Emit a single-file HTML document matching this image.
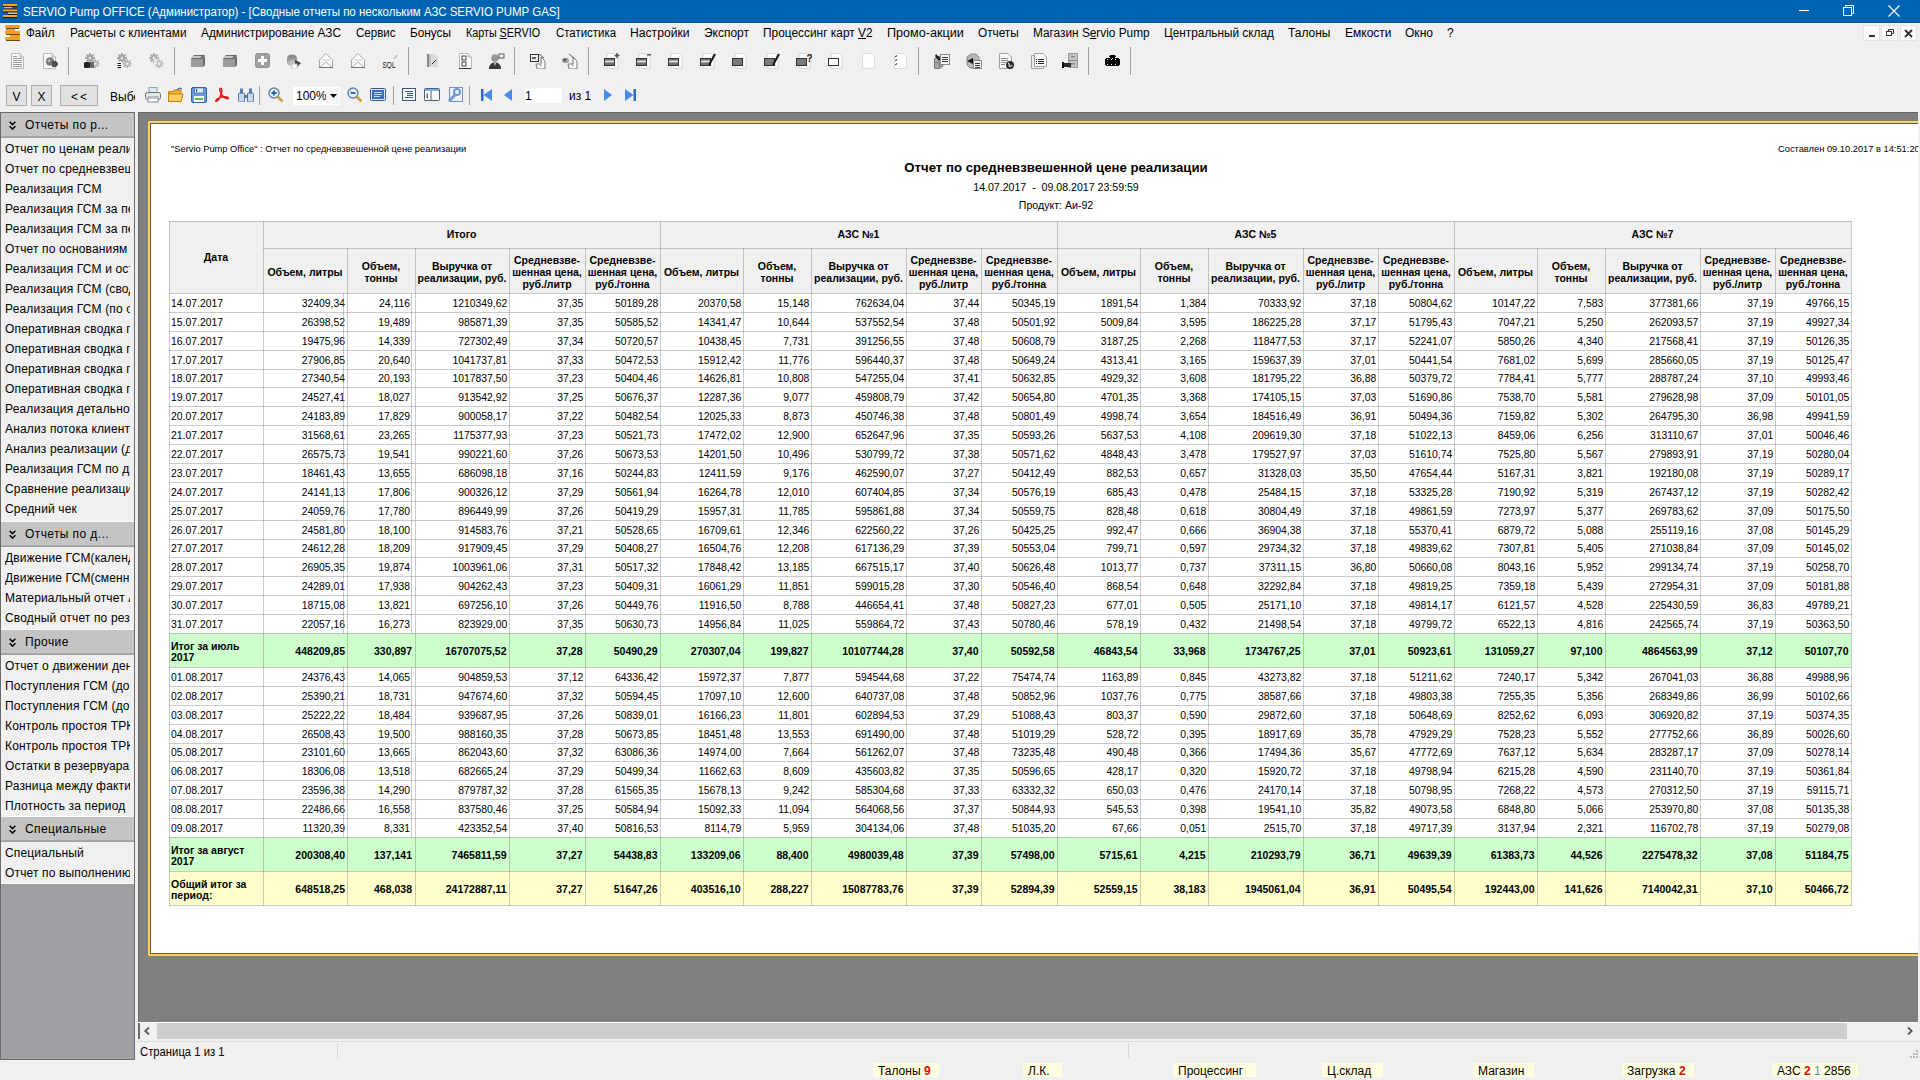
<!DOCTYPE html><html><head><meta charset="utf-8"><title>SERVIO Pump OFFICE</title><style>
*{box-sizing:border-box}
html,body{margin:0;padding:0}
body{width:1920px;height:1080px;position:relative;overflow:hidden;background:#f0f0f0;font-family:"Liberation Sans",sans-serif;color:#000}
div{position:absolute}
.t{white-space:nowrap;line-height:1}
.mi{font-size:12px;white-space:nowrap;line-height:14px;top:26px;color:#000;transform-origin:0 0}
.lp{font-size:12px;white-space:nowrap;line-height:14px;left:5px;color:#000;transform-origin:0 0;letter-spacing:0.15px}
.rc{font-size:10.4px;white-space:nowrap;line-height:19px;text-align:right;overflow:hidden}
.rl{font-size:10.4px;white-space:nowrap;line-height:19px;text-align:left}
.hd{font-size:10.5px;font-weight:bold;text-align:center;line-height:12.2px;display:flex;align-items:center;justify-content:center}
svg{position:absolute}

</style></head><body>
<div style="left:0px;top:0px;width:1920px;height:23px;background:#0063b1"></div>
<div style="left:0px;top:22px;width:1920px;height:1px;background:#0c5896"></div>
<svg style="left:3px;top:4px" width="15" height="15" viewBox="0 0 15 15"><rect x="0" y="0" width="14" height="2" fill="#f5a623"/><rect x="0" y="2" width="14" height="1" fill="#2a1a00"/><rect x="1" y="3" width="8" height="1.5" fill="#e0c090"/><rect x="0" y="4.5" width="14" height="1" fill="#2a1a00"/><rect x="0" y="5.5" width="14" height="2" fill="#f5a623"/><rect x="0" y="7.5" width="14" height="1" fill="#2a1a00"/><rect x="5" y="8.5" width="9" height="1.5" fill="#e0c090"/><rect x="5" y="10" width="9" height="1" fill="#2a1a00"/><rect x="0" y="11" width="14" height="2" fill="#f5a623"/><rect x="0" y="13" width="14" height="1.2" fill="#2a1a00"/></svg>
<div style="left:23px;top:5px;font-size:12px;line-height:14px;color:#fff;white-space:nowrap;transform:scaleX(0.957);transform-origin:0 0">SERVIO Pump OFFICE (Администратор) - [Сводные отчеты по нескольким АЗС SERVIO PUMP GAS]</div>
<div style="left:1799px;top:10px;width:10px;height:1px;background:#fff"></div>
<svg style="left:1843px;top:5px" width="11" height="11" viewBox="0 0 11 11"><rect x="0.5" y="2.5" width="8" height="8" fill="none" stroke="#fff"/><path d="M2.5 2.5V0.5H10.5V8.5H8.5" fill="none" stroke="#fff"/></svg>
<svg style="left:1888px;top:5px" width="12" height="12" viewBox="0 0 12 12"><path d="M0.5 0.5L11.5 11.5M11.5 0.5L0.5 11.5" stroke="#fff" stroke-width="1.1"/></svg>
<div style="left:0px;top:23px;width:1920px;height:1px;background:#e6f8fa"></div>
<svg style="left:5px;top:25px" width="16" height="16" viewBox="0 0 16 16"><rect x="0" y="0" width="15" height="3" rx="1" fill="#f0a020"/><rect x="1" y="3" width="13" height="1" fill="#6b4a10"/><rect x="1" y="4" width="9" height="2" fill="#f0a020"/><rect x="0" y="6" width="15" height="3" rx="1" fill="#f0a020"/><rect x="1" y="9" width="14" height="1" fill="#6b4a10"/><rect x="5" y="10" width="10" height="2" fill="#f0a020"/><rect x="0" y="12" width="15" height="3" rx="1" fill="#f0a020"/><rect x="1" y="15" width="14" height="1" fill="#6b4a10"/></svg>
<div class="mi" style="left:26px;transform:scaleX(0.965)">Файл</div>
<div class="mi" style="left:69.5px;transform:scaleX(0.980)">Расчеты с клиентами</div>
<div class="mi" style="left:201px;transform:scaleX(0.990)">Администрирование АЗС</div>
<div class="mi" style="left:356px;transform:scaleX(0.961)">Сервис</div>
<div class="mi" style="left:410px;transform:scaleX(0.984)">Бонусы</div>
<div class="mi" style="left:466px;transform:scaleX(0.895)">Карты <u>S</u>ERVIO</div>
<div class="mi" style="left:555.5px;transform:scaleX(0.952)">Статистика</div>
<div class="mi" style="left:630px;transform:scaleX(1.011)">Настройки</div>
<div class="mi" style="left:704px;transform:scaleX(0.998)">Экспорт</div>
<div class="mi" style="left:763px;transform:scaleX(0.991)">Процессинг карт <u>V</u>2</div>
<div class="mi" style="left:887px;transform:scaleX(1.050)">Промо-акции</div>
<div class="mi" style="left:978px;transform:scaleX(0.982)">Отчеты</div>
<div class="mi" style="left:1033px;transform:scaleX(0.985)">Магазин S<u>e</u>rvio Pump</div>
<div class="mi" style="left:1164px;transform:scaleX(0.985)">Центральный склад</div>
<div class="mi" style="left:1288px;transform:scaleX(0.999)">Талоны</div>
<div class="mi" style="left:1345px;transform:scaleX(1.000)">Емкости</div>
<div class="mi" style="left:1405px;transform:scaleX(1.004)">Окно</div>
<div class="mi" style="left:1447px;transform:scaleX(1.001)">?</div>
<div style="left:1863px;top:25px;width:17px;height:16px;background:#fafafa;border:1px solid #e4e4e4"></div>
<div style="left:1881px;top:25px;width:17px;height:16px;background:#fafafa;border:1px solid #e4e4e4"></div>
<div style="left:1900px;top:25px;width:17px;height:16px;background:#fafafa;border:1px solid #e4e4e4"></div>
<div style="left:1869px;top:35px;width:6px;height:2px;background:#333"></div>
<svg style="left:1886px;top:28px" width="9" height="9" viewBox="0 0 9 9"><rect x="0.5" y="3.5" width="5" height="4" fill="none" stroke="#333"/><path d="M2.5 3.5V1.5H7.5V5.5H5.5" fill="none" stroke="#333"/></svg>
<svg style="left:1904px;top:29px" width="9" height="9" viewBox="0 0 9 9"><path d="M1 1L8 8M8 1L1 8" stroke="#333" stroke-width="1.8"/></svg>
<svg style="left:11px;top:53px" width="16" height="16" viewBox="0 0 16 16"><path d="M0.5 0.5H9L12.5 4V15.5H0.5Z" fill="#fbfbfb" stroke="#b8b8b8"/><path d="M9 0.5V4H12.5" fill="#e0e0e0" stroke="#b8b8b8"/><rect x="2" y="5" width="9" height="1" fill="#9a9a9a"/><rect x="2" y="7" width="9" height="1" fill="#9a9a9a"/><rect x="2" y="9" width="9" height="1" fill="#9a9a9a"/><rect x="2" y="11" width="9" height="1" fill="#9a9a9a"/><rect x="2" y="13" width="9" height="1" fill="#9a9a9a"/><rect x="2" y="3" width="4" height="1" fill="#9a9a9a"/></svg>
<svg style="left:43px;top:53px" width="16" height="16" viewBox="0 0 16 16"><path d="M0.5 0.5H9L12.5 4V15.5H0.5Z" fill="#fbfbfb" stroke="#b8b8b8"/><path d="M9 0.5V4H12.5" fill="#e0e0e0" stroke="#b8b8b8"/><circle cx="7" cy="8.5" r="4.2" fill="#7a7a7a"/><circle cx="6" cy="7.5" r="1.6" fill="#b0b0b0"/><path d="M9 8H13L15.5 11L13 14H9Z" fill="#505050"/></svg>
<svg style="left:84px;top:53px" width="16" height="16" viewBox="0 0 16 16"><polygon points="10.92,4.10 10.92,5.90 9.52,5.76 9.03,6.95 10.11,7.85 8.85,9.11 7.95,8.03 6.76,8.52 6.90,9.92 5.10,9.92 5.24,8.52 4.05,8.03 3.15,9.11 1.89,7.85 2.97,6.95 2.48,5.76 1.08,5.90 1.08,4.10 2.48,4.24 2.97,3.05 1.89,2.15 3.15,0.89 4.05,1.97 5.24,1.48 5.10,0.08 6.90,0.08 6.76,1.48 7.95,1.97 8.85,0.89 10.11,2.15 9.03,3.05 9.52,4.24" fill="#a0a0a0"/><circle cx="6" cy="5" r="1.50" fill="#e0e0e0"/><polygon points="15.73,9.98 15.73,11.62 14.44,11.50 13.98,12.59 14.98,13.42 13.82,14.58 12.99,13.58 11.90,14.04 12.02,15.33 10.38,15.33 10.50,14.04 9.41,13.58 8.58,14.58 7.42,13.42 8.42,12.59 7.96,11.50 6.67,11.62 6.67,9.98 7.96,10.10 8.42,9.01 7.42,8.18 8.58,7.02 9.41,8.02 10.50,7.56 10.38,6.27 12.02,6.27 11.90,7.56 12.99,8.02 13.82,7.02 14.98,8.18 13.98,9.01 14.44,10.10" fill="#b4b4b4"/><circle cx="11.2" cy="10.8" r="1.38" fill="#eeeeee"/><rect x="0" y="9" width="6" height="6" rx="1.5" fill="#202020"/><rect x="6" y="9" width="4" height="6" fill="#686868"/></svg>
<svg style="left:116px;top:53px" width="16" height="16" viewBox="0 0 16 16"><polygon points="10.92,4.10 10.92,5.90 9.52,5.76 9.03,6.95 10.11,7.85 8.85,9.11 7.95,8.03 6.76,8.52 6.90,9.92 5.10,9.92 5.24,8.52 4.05,8.03 3.15,9.11 1.89,7.85 2.97,6.95 2.48,5.76 1.08,5.90 1.08,4.10 2.48,4.24 2.97,3.05 1.89,2.15 3.15,0.89 4.05,1.97 5.24,1.48 5.10,0.08 6.90,0.08 6.76,1.48 7.95,1.97 8.85,0.89 10.11,2.15 9.03,3.05 9.52,4.24" fill="#a0a0a0"/><circle cx="6" cy="5" r="1.50" fill="#e0e0e0"/><polygon points="15.73,9.98 15.73,11.62 14.44,11.50 13.98,12.59 14.98,13.42 13.82,14.58 12.99,13.58 11.90,14.04 12.02,15.33 10.38,15.33 10.50,14.04 9.41,13.58 8.58,14.58 7.42,13.42 8.42,12.59 7.96,11.50 6.67,11.62 6.67,9.98 7.96,10.10 8.42,9.01 7.42,8.18 8.58,7.02 9.41,8.02 10.50,7.56 10.38,6.27 12.02,6.27 11.90,7.56 12.99,8.02 13.82,7.02 14.98,8.18 13.98,9.01 14.44,10.10" fill="#b4b4b4"/><circle cx="11.2" cy="10.8" r="1.38" fill="#eeeeee"/><rect x="1" y="9" width="5" height="7" fill="#fff"/><rect x="1.5" y="10" width="3.5" height="1" fill="#111"/><rect x="1.5" y="12" width="3.5" height="1" fill="#111"/><rect x="1.5" y="14" width="3.5" height="1.2" fill="#111"/></svg>
<svg style="left:148px;top:53px" width="16" height="16" viewBox="0 0 16 16"><polygon points="10.92,4.10 10.92,5.90 9.52,5.76 9.03,6.95 10.11,7.85 8.85,9.11 7.95,8.03 6.76,8.52 6.90,9.92 5.10,9.92 5.24,8.52 4.05,8.03 3.15,9.11 1.89,7.85 2.97,6.95 2.48,5.76 1.08,5.90 1.08,4.10 2.48,4.24 2.97,3.05 1.89,2.15 3.15,0.89 4.05,1.97 5.24,1.48 5.10,0.08 6.90,0.08 6.76,1.48 7.95,1.97 8.85,0.89 10.11,2.15 9.03,3.05 9.52,4.24" fill="#a8a8a8"/><circle cx="6" cy="5" r="1.50" fill="#e8e8e8"/><polygon points="15.73,9.98 15.73,11.62 14.44,11.50 13.98,12.59 14.98,13.42 13.82,14.58 12.99,13.58 11.90,14.04 12.02,15.33 10.38,15.33 10.50,14.04 9.41,13.58 8.58,14.58 7.42,13.42 8.42,12.59 7.96,11.50 6.67,11.62 6.67,9.98 7.96,10.10 8.42,9.01 7.42,8.18 8.58,7.02 9.41,8.02 10.50,7.56 10.38,6.27 12.02,6.27 11.90,7.56 12.99,8.02 13.82,7.02 14.98,8.18 13.98,9.01 14.44,10.10" fill="#bcbcbc"/><circle cx="11.2" cy="10.8" r="1.38" fill="#f0f0f0"/><rect x="6" y="6" width="3" height="5" fill="#e8e8e8"/></svg>
<svg style="left:190px;top:53px" width="16" height="16" viewBox="0 0 16 16"><path d="M1 6L4 2H15L13 6Z" fill="#6a6a6a"/><path d="M1 6H13V14H1Z" fill="#9a9a9a"/><path d="M13 6L15 3V12L13 14Z" fill="#6a6a6a"/><path d="M3 3H12L10 5H1.5Z" fill="#c8c8c8"/></svg>
<svg style="left:222px;top:53px" width="16" height="16" viewBox="0 0 16 16"><path d="M1 6L4 2H15L13 6Z" fill="#6a6a6a"/><path d="M1 6H13V14H1Z" fill="#9a9a9a"/><path d="M13 6L15 3V12L13 14Z" fill="#6a6a6a"/><path d="M3 3H12L10 5H1.5Z" fill="#c8c8c8"/></svg>
<svg style="left:255px;top:53px" width="16" height="16" viewBox="0 0 16 16"><rect x="0.5" y="0.5" width="14" height="14" rx="2" fill="#a0a0a0" stroke="#909090"/><rect x="6" y="3" width="3" height="9" fill="#fff"/><rect x="3" y="6" width="9" height="3" fill="#fff"/></svg>
<svg style="left:286px;top:53px" width="16" height="16" viewBox="0 0 16 16"><ellipse cx="6" cy="5" rx="5" ry="3.5" fill="#8a8a8a"/><rect x="1" y="5" width="10" height="5" fill="#9a9a9a"/><ellipse cx="6" cy="10" rx="5" ry="3" fill="#bcbcbc"/><path d="M9 7L15 10L11 14L9 12Z" fill="#404040"/><rect x="6" y="11" width="5" height="5" fill="#fff" stroke="#ccc"/></svg>
<svg style="left:319px;top:53px" width="16" height="16" viewBox="0 0 16 16"><path d="M0.5 7L7 0.5L13.5 7V14.5H0.5Z" fill="#fafafa" stroke="#a8a8a8"/><path d="M0.5 14.5L7 9L13.5 14.5" fill="none" stroke="#b0b0b0"/><path d="M3 7H11" stroke="#c8c8c8"/><rect x="0" y="14" width="14" height="1" fill="#707070"/></svg>
<svg style="left:351px;top:53px" width="16" height="16" viewBox="0 0 16 16"><path d="M0.5 7L7 0.5L13.5 7V14.5H0.5Z" fill="#fafafa" stroke="#a8a8a8"/><path d="M0.5 14.5L7 9L13.5 14.5" fill="none" stroke="#b0b0b0"/><path d="M3 7H11" stroke="#c8c8c8"/><rect x="0" y="14" width="14" height="1" fill="#707070"/></svg>
<svg style="left:382px;top:53px" width="16" height="16" viewBox="0 0 16 16"><text x="0.5" y="14.5" font-family="Liberation Sans" font-size="8.5" fill="#111" textLength="13" lengthAdjust="spacingAndGlyphs">SQL</text><path d="M12 6L15 2" stroke="#999"/></svg>
<svg style="left:426px;top:53px" width="16" height="16" viewBox="0 0 16 16"><path d="M1 1H9L12 4V14H1Z" fill="#d8d8d8"/><rect x="1" y="1" width="2" height="13" fill="#888"/><path d="M4 2V13" stroke="#aaa"/><path d="M6 11L10 7" stroke="#333"/></svg>
<svg style="left:459px;top:53px" width="16" height="16" viewBox="0 0 16 16"><path d="M0.5 0.5H9L12.5 4V15.5H0.5Z" fill="#fbfbfb" stroke="#b8b8b8"/><path d="M9 0.5V4H12.5" fill="#e0e0e0" stroke="#b8b8b8"/><rect x="3" y="3" width="4" height="4" fill="none" stroke="#444"/><rect x="3" y="9" width="4" height="4" fill="none" stroke="#444"/><rect x="0" y="15" width="12" height="1" fill="#333"/></svg>
<svg style="left:489px;top:53px" width="16" height="16" viewBox="0 0 16 16"><circle cx="6" cy="5" r="3.8" fill="#9a9a9a"/><path d="M0 16C0 11 3 9.5 6 9.5S12 11 12 16Z" fill="#3a3a3a"/><path d="M5 10L6 13L7 10Z" fill="#ddd"/><rect x="10" y="1" width="5" height="4" fill="#fff" stroke="#555"/></svg>
<svg style="left:530px;top:53px" width="16" height="16" viewBox="0 0 16 16"><rect x="0.5" y="1.5" width="8" height="7" fill="#f0f0f0" stroke="#333"/><rect x="2" y="4" width="4" height="2" fill="#666"/><path d="M6 11H11V4L15 8V16H7Z" fill="#f8f8f8" stroke="#777"/><path d="M9 1L14 5" stroke="#555"/><path d="M10 13L11 11L12 13Z" fill="#888"/></svg>
<svg style="left:562px;top:53px" width="16" height="16" viewBox="0 0 16 16"><path d="M1 6H6V9H1Z" fill="#fff" stroke="#666"/><path d="M3 5L5 7L3 9L1 7Z" fill="#555"/><path d="M6 11H11V4L15 8V16H7Z" fill="#f8f8f8" stroke="#777"/><path d="M7 1L13 6" stroke="#555"/><path d="M10 13L11 11L12 13Z" fill="#888"/></svg>
<svg style="left:604px;top:53px" width="16" height="16" viewBox="0 0 16 16"><path d="M3 0.5H11L14 3.5V15.5H3Z" fill="#fbfbfb" stroke="#d8d8d8"/><rect x="0.5" y="5.5" width="10" height="7" fill="#707070" stroke="#333"/><rect x="1" y="7.5" width="9" height="2" fill="#d8d8d8"/><path d="M10.5 2.5H15.5M13 0V5" stroke="#555" stroke-width="1.6"/></svg>
<svg style="left:636px;top:53px" width="16" height="16" viewBox="0 0 16 16"><path d="M3 0.5H11L14 3.5V15.5H3Z" fill="#fbfbfb" stroke="#d8d8d8"/><rect x="0.5" y="5.5" width="10" height="7" fill="#707070" stroke="#333"/><rect x="1" y="7.5" width="9" height="2" fill="#d8d8d8"/><rect x="11" y="1" width="4" height="1.5" fill="#555"/></svg>
<svg style="left:668px;top:53px" width="16" height="16" viewBox="0 0 16 16"><path d="M3 0.5H11L14 3.5V15.5H3Z" fill="#fbfbfb" stroke="#d8d8d8"/><rect x="0.5" y="5.5" width="10" height="7" fill="#707070" stroke="#333"/><rect x="1" y="7.5" width="9" height="2" fill="#d8d8d8"/></svg>
<svg style="left:700px;top:53px" width="16" height="16" viewBox="0 0 16 16"><path d="M3 0.5H11L14 3.5V15.5H3Z" fill="#fbfbfb" stroke="#d8d8d8"/><rect x="0.5" y="5.5" width="10" height="7" fill="#707070" stroke="#333"/><rect x="1" y="7.5" width="9" height="2" fill="#d8d8d8"/><path d="M9 12L15 1" stroke="#111" stroke-width="2"/></svg>
<svg style="left:732px;top:53px" width="16" height="16" viewBox="0 0 16 16"><path d="M3 0.5H11L14 3.5V15.5H3Z" fill="#fbfbfb" stroke="#d8d8d8"/><rect x="0.5" y="5.5" width="10" height="7" fill="#7a7a7a" stroke="#333"/></svg>
<svg style="left:764px;top:53px" width="16" height="16" viewBox="0 0 16 16"><path d="M3 0.5H11L14 3.5V15.5H3Z" fill="#fbfbfb" stroke="#d8d8d8"/><rect x="0.5" y="5.5" width="10" height="7" fill="#7a7a7a" stroke="#333"/><path d="M9 12L15 1" stroke="#111" stroke-width="2"/></svg>
<svg style="left:796px;top:53px" width="16" height="16" viewBox="0 0 16 16"><path d="M3 0.5H11L14 3.5V15.5H3Z" fill="#fbfbfb" stroke="#d8d8d8"/><rect x="0.5" y="5.5" width="10" height="7" fill="#7a7a7a" stroke="#333"/><text x="10.5" y="9" font-family="Liberation Sans" font-size="10" font-weight="bold" fill="#111">?</text></svg>
<svg style="left:828px;top:53px" width="16" height="16" viewBox="0 0 16 16"><path d="M3 0.5H11L14 3.5V15.5H3Z" fill="#fbfbfb" stroke="#d8d8d8"/><rect x="0.5" y="5.5" width="10" height="7" fill="#fff" stroke="#333"/></svg>
<svg style="left:862px;top:53px" width="16" height="16" viewBox="0 0 16 16"><path d="M0.5 0.5H9L12.5 4V15.5H0.5Z" fill="#fdfdfd" stroke="#dcdcdc"/></svg>
<svg style="left:894px;top:53px" width="16" height="16" viewBox="0 0 16 16"><path d="M0.5 0.5H9L12.5 4V15.5H0.5Z" fill="#fdfdfd" stroke="#dcdcdc"/><path d="M1 3L2 4L3 2M1 7L2 8L3 6M1 11L2 12L3 10" stroke="#555" fill="none"/></svg>
<svg style="left:934px;top:53px" width="16" height="16" viewBox="0 0 16 16"><path d="M0.5 5.5L4 3.5H9V13L5.5 15.5H0.5Z" fill="#a8a8a8" stroke="#7a7a7a"/><path d="M0.5 9.5H5.5V15.5" fill="none" stroke="#7a7a7a"/><path d="M2 1L7 6L5 8L1 3Z" fill="#1a1a1a"/><rect x="6.5" y="1.5" width="9" height="10" fill="#f8f8f8" stroke="#8a8a8a"/><path d="M8 4.5H14M8 6.5H14M8 8.5H14" stroke="#333"/></svg>
<svg style="left:966px;top:53px" width="16" height="16" viewBox="0 0 16 16"><path d="M1 4L5 1H10L13 4V12L9 15H4L1 12Z" fill="#b4b4b4" stroke="#8a8a8a"/><path d="M1 8L7 5V11Z" fill="#1a1a1a"/><rect x="3" y="7" width="5" height="2" fill="#1a1a1a"/><rect x="7.5" y="7.5" width="8" height="8" fill="#f8f8f8" stroke="#8a8a8a"/><path d="M9 10.5H14M9 12.5H14M9 14.5H14" stroke="#333"/></svg>
<svg style="left:999px;top:53px" width="16" height="16" viewBox="0 0 16 16"><path d="M0.5 0.5H9L12.5 4V15.5H0.5Z" fill="#f8f8f8" stroke="#a0a0a0"/><path d="M2 5.5H9M2 7.5H9M2 9.5H7M2 11.5H6" stroke="#888"/><circle cx="11" cy="12" r="4" fill="#2a2a2a"/><path d="M9 10Q11 11 10 13Q12 14 13 12" fill="none" stroke="#ddd" stroke-width="1.2"/></svg>
<svg style="left:1031px;top:53px" width="16" height="16" viewBox="0 0 16 16"><path d="M0.5 2.5H9L12.5 6V15.5H0.5Z" fill="#ececec" stroke="#a0a0a0"/><path d="M3.5 0.5H12L15.5 4V13.5H3.5Z" fill="#fafafa" stroke="#a0a0a0"/><path d="M5 6.5H6M5 8.5H6M5 10.5H6M7 6.5H13M7 8.5H13M7 10.5H13" stroke="#222"/></svg>
<svg style="left:1062px;top:53px" width="16" height="16" viewBox="0 0 16 16"><rect x="6.5" y="0.5" width="9" height="14" fill="#c4c4c4" stroke="#9a9a9a"/><path d="M7 7.5H15" stroke="#8a8a8a"/><rect x="9" y="3" width="4" height="1.5" fill="#888"/><rect x="9" y="10" width="4" height="1.5" fill="#888"/><path d="M0 10H9V14H0Z" fill="#2a2a2a"/><rect x="0" y="9" width="2" height="6" fill="#111"/></svg>
<svg style="left:1105px;top:55px" width="16" height="16" viewBox="0 0 16 16"><path d="M4 2L5 0H10L11 2Z" fill="#000"/><rect x="5" y="2" width="5" height="1" fill="#000"/><path d="M1 3H14L14 11H1Z" fill="#000"/><rect x="0" y="4" width="15" height="6" fill="#000"/><rect x="2" y="4" width="1" height="1" fill="#eee"/><rect x="6" y="4" width="1" height="1" fill="#eee"/><rect x="7" y="3" width="1" height="1" fill="#eee"/><rect x="10" y="4" width="1" height="1" fill="#eee"/><rect x="2" y="9" width="1" height="1" fill="#eee"/><rect x="6" y="9" width="1" height="1" fill="#eee"/><rect x="10" y="9" width="1" height="1" fill="#eee"/></svg>
<div style="left:68px;top:47px;width:1px;height:28px;background:#a0a0a0"></div>
<div style="left:174px;top:47px;width:1px;height:28px;background:#a0a0a0"></div>
<div style="left:408px;top:47px;width:1px;height:28px;background:#a0a0a0"></div>
<div style="left:514px;top:47px;width:1px;height:28px;background:#a0a0a0"></div>
<div style="left:588px;top:47px;width:1px;height:28px;background:#a0a0a0"></div>
<div style="left:918px;top:47px;width:1px;height:28px;background:#a0a0a0"></div>
<div style="left:1088px;top:47px;width:1px;height:28px;background:#a0a0a0"></div>
<div style="left:1130px;top:47px;width:1px;height:28px;background:#a0a0a0"></div>
<div style="left:6px;top:85px;width:21px;height:21px;background:#e1e1e1;border:1px solid #adadad;font-size:12px;line-height:23px;text-align:center;color:#000;">V</div>
<div style="left:31px;top:85px;width:21px;height:21px;background:#e1e1e1;border:1px solid #adadad;font-size:12px;line-height:23px;text-align:center;color:#000;">X</div>
<div style="left:60px;top:85px;width:38px;height:21px;background:#e1e1e1;border:1px solid #adadad;font-size:12px;line-height:23px;text-align:center;color:#000;letter-spacing:2px;padding-left:2px;">&lt;&lt;</div>
<div style="left:110px;top:90px;width:25px;height:15px;overflow:hidden;font-size:12px;line-height:15px;white-space:nowrap">Выберите</div>
<svg style="left:145px;top:87px" width="16" height="16" viewBox="0 0 16 16"><rect x="4" y="0.5" width="8" height="6" fill="#d8e8f8" stroke="#8aa"/><rect x="0.5" y="5.5" width="15" height="7" rx="2" fill="#e8e8e8" stroke="#707070"/><rect x="3" y="10" width="10" height="5" fill="#fff" stroke="#888"/><rect x="3" y="11" width="10" height="1" fill="#9cc4e8"/></svg>
<svg style="left:168px;top:87px" width="16" height="16" viewBox="0 0 16 16"><path d="M0.5 4.5H5L6 3H13V14.5H0.5Z" fill="#f0b030" stroke="#c08010"/><path d="M0.5 7H15L13 14.5H0.5Z" fill="#ffd060" stroke="#c08010"/><path d="M9 3Q11 0 14 2" fill="none" stroke="#4070b0" stroke-width="1.2"/></svg>
<svg style="left:191px;top:87px" width="16" height="16" viewBox="0 0 16 16"><rect x="0.5" y="0.5" width="15" height="15" rx="1.5" fill="#6a98dc" stroke="#3060b0"/><rect x="3.5" y="1" width="9" height="5" fill="#e4eefa" stroke="#3060b0" stroke-width="0.6"/><rect x="3" y="9" width="10" height="6" fill="#fafafa"/><rect x="4" y="11" width="8" height="2" fill="#5cb85c"/><rect x="5" y="2" width="1.2" height="3" fill="#3060b0"/></svg>
<svg style="left:214px;top:87px" width="15" height="15" viewBox="0 0 15 15"><path d="M6.5 1.2C4.8 1.5 6.2 5.5 8.2 8.4C10.2 11.2 13.8 12.6 14.2 11.2C14.6 9.6 8.5 9.2 4.6 11.2C1.4 12.8 1.2 14.8 2.6 14.2C4.2 13.5 6.5 9.5 7.5 5.8C8.2 3.2 7.8 1 6.5 1.2Z" fill="none" stroke="#e01818" stroke-width="1.5"/></svg>
<svg style="left:238px;top:88px" width="16" height="14" viewBox="0 0 16 14"><rect x="0.5" y="5" width="6" height="9" rx="1" fill="#c8daf0" stroke="#5a7aa8"/><rect x="9.5" y="5" width="6" height="9" rx="1" fill="#c8daf0" stroke="#5a7aa8"/><rect x="2" y="0.5" width="3" height="5" fill="#5a7aa8"/><rect x="11" y="0.5" width="3" height="5" fill="#5a7aa8"/><rect x="6" y="7" width="4" height="3" fill="#5a7aa8"/></svg>
<svg style="left:268px;top:87px" width="16" height="16" viewBox="0 0 16 16"><circle cx="6" cy="6" r="5" fill="#e8f0fa" stroke="#6080a8" stroke-width="1.4"/><path d="M6 3.5V8.5M3.5 6H8.5" stroke="#2a5aa8" stroke-width="1.8"/><path d="M9.5 9.5L14.5 14.5" stroke="#c8a040" stroke-width="2.6"/></svg>
<svg style="left:347px;top:87px" width="16" height="16" viewBox="0 0 16 16"><circle cx="6" cy="6" r="5" fill="#e8f0fa" stroke="#6080a8" stroke-width="1.4"/><path d="M3.5 6H8.5" stroke="#2a5aa8" stroke-width="1.8"/><path d="M9.5 9.5L14.5 14.5" stroke="#c8a040" stroke-width="2.6"/></svg>
<svg style="left:370px;top:88px" width="16" height="13" viewBox="0 0 16 13"><rect x="0.5" y="0.5" width="15" height="12" rx="1" fill="#dce8f8" stroke="#405a80"/><rect x="2" y="2" width="12" height="9" fill="#3a6ac8"/><path d="M4 4.5H12M4 6.5H12M4 8.5H10" stroke="#c8dcf8"/></svg>
<svg style="left:402px;top:88px" width="14" height="13" viewBox="0 0 14 13"><rect x="0.5" y="0.5" width="13" height="12" fill="#f4f8fc" stroke="#405a80"/><path d="M3 3.5H11M5 5.5H11M5 7.5H11M3 9.5H11" stroke="#405a80"/></svg>
<svg style="left:424px;top:88px" width="16" height="13" viewBox="0 0 16 13"><rect x="0.5" y="0.5" width="15" height="12" rx="1" fill="#fff" stroke="#405a80"/><rect x="1" y="1" width="14" height="2" fill="#8aaad8"/><path d="M7 3V12" stroke="#405a80"/><path d="M3 5V10H4" stroke="#806030"/></svg>
<svg style="left:447px;top:87px" width="16" height="16" viewBox="0 0 16 16"><rect x="2.5" y="0.5" width="13" height="14" fill="#eef2f8" stroke="#7090b8"/><path d="M2 14L9 7" stroke="#6a9ad8" stroke-width="3"/><circle cx="10" cy="5" r="3" fill="none" stroke="#6a9ad8" stroke-width="2"/></svg>
<svg style="left:481px;top:89px" width="11" height="12" viewBox="0 0 11 12"><rect x="0" y="0" width="2.5" height="12" fill="#2a6ad0"/><path d="M11 0V12L2.5 6Z" fill="#4a8ae8"/></svg>
<svg style="left:504px;top:89px" width="8" height="12" viewBox="0 0 8 12"><path d="M8 0V12L0 6Z" fill="#4a8ae8"/></svg>
<svg style="left:604px;top:89px" width="8" height="12" viewBox="0 0 8 12"><path d="M0 0V12L8 6Z" fill="#4a8ae8"/></svg>
<svg style="left:625px;top:89px" width="11" height="12" viewBox="0 0 11 12"><rect x="8.5" y="0" width="2.5" height="12" fill="#2a6ad0"/><path d="M0 0V12L8.5 6Z" fill="#4a8ae8"/></svg>
<div style="left:259px;top:86px;width:1px;height:19px;background:#a0a0a0"></div>
<div style="left:393px;top:86px;width:1px;height:19px;background:#a0a0a0"></div>
<div style="left:469px;top:86px;width:1px;height:19px;background:#a0a0a0"></div>
<div style="left:293px;top:87px;width:47px;height:18px;background:#fff"></div>
<div style="left:296px;top:89px;font-size:12px;line-height:15px;white-space:nowrap">100%</div>
<div style="left:326px;top:88px;width:13px;height:16px;background:#f4f4f4"></div>
<svg style="left:330px;top:94px" width="7" height="4" viewBox="0 0 7 4"><path d="M0 0H7L3.5 4Z" fill="#000"/></svg>
<div style="left:525px;top:88px;width:37px;height:15px;background:#fff"></div>
<div style="left:525px;top:89px;font-size:12px;line-height:14px;white-space:nowrap">1</div>
<div style="left:569px;top:89px;font-size:12px;line-height:14px;white-space:nowrap">из 1</div>
<div style="left:0px;top:112px;width:135px;height:948px;background:#a0a0a4;border:1px solid #6a6a6a"></div>
<div style="left:1px;top:113px;width:133px;height:24px;background:#c4c4c4;border-bottom:1px solid #a8a8a8"></div>

<svg style="left:9px;top:121px" width="7" height="9" viewBox="0 0 7 9"><path d="M0.6 0.8L3.5 3.6L6.4 0.8M0.6 5.3L3.5 8.1L6.4 5.3" fill="none" stroke="#000" stroke-width="1.5"/></svg>
<div style="left:25px;top:118px;width:105px;overflow:hidden;font-size:12px;line-height:14px;white-space:nowrap;letter-spacing:0.4px">Отчеты по р...</div>
<div style="left:1px;top:138px;width:133px;height:383px;background:#f0f0f0"></div>
<div style="left:5px;top:142px;width:125px;overflow:hidden;font-size:12px;line-height:14px;white-space:nowrap;letter-spacing:0.15px">Отчет по ценам реализации</div>
<div style="left:5px;top:162px;width:125px;overflow:hidden;font-size:12px;line-height:14px;white-space:nowrap;letter-spacing:0.15px">Отчет по средневзвешенной</div>
<div style="left:5px;top:182px;width:125px;overflow:hidden;font-size:12px;line-height:14px;white-space:nowrap;letter-spacing:0.15px">Реализация ГСМ</div>
<div style="left:5px;top:202px;width:125px;overflow:hidden;font-size:12px;line-height:14px;white-space:nowrap;letter-spacing:0.15px">Реализация ГСМ за период</div>
<div style="left:5px;top:222px;width:125px;overflow:hidden;font-size:12px;line-height:14px;white-space:nowrap;letter-spacing:0.15px">Реализация ГСМ за период</div>
<div style="left:5px;top:242px;width:125px;overflow:hidden;font-size:12px;line-height:14px;white-space:nowrap;letter-spacing:0.15px">Отчет по основаниям</div>
<div style="left:5px;top:262px;width:125px;overflow:hidden;font-size:12px;line-height:14px;white-space:nowrap;letter-spacing:0.15px">Реализация ГСМ и остатки</div>
<div style="left:5px;top:282px;width:125px;overflow:hidden;font-size:12px;line-height:14px;white-space:nowrap;letter-spacing:0.15px">Реализация ГСМ (сводный)</div>
<div style="left:5px;top:302px;width:125px;overflow:hidden;font-size:12px;line-height:14px;white-space:nowrap;letter-spacing:0.15px">Реализация ГСМ (по операторам)</div>
<div style="left:5px;top:322px;width:125px;overflow:hidden;font-size:12px;line-height:14px;white-space:nowrap;letter-spacing:0.15px">Оперативная сводка по</div>
<div style="left:5px;top:342px;width:125px;overflow:hidden;font-size:12px;line-height:14px;white-space:nowrap;letter-spacing:0.15px">Оперативная сводка по</div>
<div style="left:5px;top:362px;width:125px;overflow:hidden;font-size:12px;line-height:14px;white-space:nowrap;letter-spacing:0.15px">Оперативная сводка по</div>
<div style="left:5px;top:382px;width:125px;overflow:hidden;font-size:12px;line-height:14px;white-space:nowrap;letter-spacing:0.15px">Оперативная сводка по</div>
<div style="left:5px;top:402px;width:125px;overflow:hidden;font-size:12px;line-height:14px;white-space:nowrap;letter-spacing:0.15px">Реализация детально</div>
<div style="left:5px;top:422px;width:125px;overflow:hidden;font-size:12px;line-height:14px;white-space:nowrap;letter-spacing:0.15px">Анализ потока клиентов</div>
<div style="left:5px;top:442px;width:125px;overflow:hidden;font-size:12px;line-height:14px;white-space:nowrap;letter-spacing:0.15px">Анализ реализации (детально)</div>
<div style="left:5px;top:462px;width:125px;overflow:hidden;font-size:12px;line-height:14px;white-space:nowrap;letter-spacing:0.15px">Реализация ГСМ по дням</div>
<div style="left:5px;top:482px;width:125px;overflow:hidden;font-size:12px;line-height:14px;white-space:nowrap;letter-spacing:0.15px">Сравнение реализации</div>
<div style="left:5px;top:502px;width:125px;overflow:hidden;font-size:12px;line-height:14px;white-space:nowrap;letter-spacing:0.15px">Средний чек</div>
<div style="left:1px;top:522px;width:133px;height:24px;background:#c4c4c4;border-bottom:1px solid #a8a8a8"></div>
<div style="left:1px;top:521px;width:133px;height:1px;background:#fafafa"></div>
<svg style="left:9px;top:530px" width="7" height="9" viewBox="0 0 7 9"><path d="M0.6 0.8L3.5 3.6L6.4 0.8M0.6 5.3L3.5 8.1L6.4 5.3" fill="none" stroke="#000" stroke-width="1.5"/></svg>
<div style="left:25px;top:527px;width:105px;overflow:hidden;font-size:12px;line-height:14px;white-space:nowrap;letter-spacing:0.4px">Отчеты по д...</div>
<div style="left:1px;top:547px;width:133px;height:82px;background:#f0f0f0"></div>
<div style="left:5px;top:551px;width:125px;overflow:hidden;font-size:12px;line-height:14px;white-space:nowrap;letter-spacing:0.15px">Движение ГСМ(календарный)</div>
<div style="left:5px;top:571px;width:125px;overflow:hidden;font-size:12px;line-height:14px;white-space:nowrap;letter-spacing:0.15px">Движение ГСМ(сменный)</div>
<div style="left:5px;top:591px;width:125px;overflow:hidden;font-size:12px;line-height:14px;white-space:nowrap;letter-spacing:0.15px">Материальный отчет АЗС</div>
<div style="left:5px;top:611px;width:125px;overflow:hidden;font-size:12px;line-height:14px;white-space:nowrap;letter-spacing:0.15px">Сводный отчет по резервуарам</div>
<div style="left:1px;top:630px;width:133px;height:24px;background:#c4c4c4;border-bottom:1px solid #a8a8a8"></div>
<div style="left:1px;top:629px;width:133px;height:1px;background:#fafafa"></div>
<svg style="left:9px;top:638px" width="7" height="9" viewBox="0 0 7 9"><path d="M0.6 0.8L3.5 3.6L6.4 0.8M0.6 5.3L3.5 8.1L6.4 5.3" fill="none" stroke="#000" stroke-width="1.5"/></svg>
<div style="left:25px;top:635px;width:105px;overflow:hidden;font-size:12px;line-height:14px;white-space:nowrap;letter-spacing:0.4px">Прочие</div>
<div style="left:1px;top:655px;width:133px;height:161px;background:#f0f0f0"></div>
<div style="left:5px;top:659px;width:125px;overflow:hidden;font-size:12px;line-height:14px;white-space:nowrap;letter-spacing:0.15px">Отчет о движении денег</div>
<div style="left:5px;top:679px;width:125px;overflow:hidden;font-size:12px;line-height:14px;white-space:nowrap;letter-spacing:0.15px">Поступления ГСМ (документ)</div>
<div style="left:5px;top:699px;width:125px;overflow:hidden;font-size:12px;line-height:14px;white-space:nowrap;letter-spacing:0.15px">Поступления ГСМ (документ)</div>
<div style="left:5px;top:719px;width:125px;overflow:hidden;font-size:12px;line-height:14px;white-space:nowrap;letter-spacing:0.15px">Контроль простоя ТРК</div>
<div style="left:5px;top:739px;width:125px;overflow:hidden;font-size:12px;line-height:14px;white-space:nowrap;letter-spacing:0.15px">Контроль простоя ТРК</div>
<div style="left:5px;top:759px;width:125px;overflow:hidden;font-size:12px;line-height:14px;white-space:nowrap;letter-spacing:0.15px">Остатки в резервуарах</div>
<div style="left:5px;top:779px;width:125px;overflow:hidden;font-size:12px;line-height:14px;white-space:nowrap;letter-spacing:0.15px">Разница между фактическим</div>
<div style="left:5px;top:799px;width:125px;overflow:hidden;font-size:12px;line-height:14px;white-space:nowrap;letter-spacing:0.15px">Плотность за период</div>
<div style="left:1px;top:817px;width:133px;height:24px;background:#c4c4c4;border-bottom:1px solid #a8a8a8"></div>
<div style="left:1px;top:816px;width:133px;height:1px;background:#fafafa"></div>
<svg style="left:9px;top:825px" width="7" height="9" viewBox="0 0 7 9"><path d="M0.6 0.8L3.5 3.6L6.4 0.8M0.6 5.3L3.5 8.1L6.4 5.3" fill="none" stroke="#000" stroke-width="1.5"/></svg>
<div style="left:25px;top:822px;width:105px;overflow:hidden;font-size:12px;line-height:14px;white-space:nowrap;letter-spacing:0.4px">Специальные</div>
<div style="left:1px;top:842px;width:133px;height:41px;background:#f0f0f0"></div>
<div style="left:5px;top:846px;width:125px;overflow:hidden;font-size:12px;line-height:14px;white-space:nowrap;letter-spacing:0.15px">Специальный</div>
<div style="left:5px;top:866px;width:125px;overflow:hidden;font-size:12px;line-height:14px;white-space:nowrap;letter-spacing:0.15px">Отчет по выполнению</div>
<div style="left:1px;top:883px;width:133px;height:1px;background:#fafafa"></div>
<div style="left:138px;top:112px;width:1780px;height:910px;background:#808080;border-top:1px solid #646464;border-left:1px solid #6a6a6a"></div>
<div style="left:1918px;top:112px;width:2px;height:910px;background:#f0f0f0"></div>
<div style="left:148px;top:121px;width:1770px;height:835px;background:#fff;border:2px solid #ffd050;border-top-color:#ecd48c;border-right:none"></div>
<div style="left:148px;top:120px;width:1770px;height:1px;background:#8c7a48"></div>
<div style="left:150px;top:123px;width:1768px;height:831px;border:1px solid #6e5a2e;border-right:none;background:#fff"></div>
<div style="left:138px;top:1022px;width:1780px;height:1px;background:#fff"></div>
<div style="left:138px;top:1023px;width:1780px;height:16px;background:#f0f0f0"></div>
<div style="left:138px;top:1023px;width:2px;height:16px;background:#6a6a6a"></div>
<div style="left:157px;top:1023px;width:1690px;height:16px;background:#cdcdcd"></div>
<svg style="left:144px;top:1027px" width="6" height="8" viewBox="0 0 6 8"><path d="M5 0.5L1.2 4L5 7.5" fill="none" stroke="#555" stroke-width="1.8"/></svg>
<svg style="left:1907px;top:1027px" width="6" height="8" viewBox="0 0 6 8"><path d="M1 0.5L4.8 4L1 7.5" fill="none" stroke="#555" stroke-width="1.8"/></svg>
<div style="left:136px;top:1041px;width:1784px;height:1px;background:#dcdcdc"></div>
<div style="left:140px;top:1045px;font-size:12px;line-height:14px;white-space:nowrap;transform:scaleX(0.94);transform-origin:0 0">Страница 1 из 1</div>
<div style="left:337px;top:1043px;width:1px;height:15px;background:#d8d8d8"></div>
<div style="left:1128px;top:1043px;width:1px;height:15px;background:#d8d8d8"></div>
<div style="left:1916px;top:1050px;width:2px;height:2px;background:#b8b8b8"></div>
<div style="left:1913px;top:1053px;width:2px;height:2px;background:#b8b8b8"></div>
<div style="left:1916px;top:1053px;width:2px;height:2px;background:#b8b8b8"></div>
<div style="left:1910px;top:1056px;width:2px;height:2px;background:#b8b8b8"></div>
<div style="left:1913px;top:1056px;width:2px;height:2px;background:#b8b8b8"></div>
<div style="left:1916px;top:1056px;width:2px;height:2px;background:#b8b8b8"></div>
<div style="left:873px;top:1063px;width:66px;height:14px;background:#fffde0;font-size:12px;line-height:16px;white-space:nowrap;padding-left:5px">Талоны <b style="color:#d01010">9</b></div>
<div style="left:1023px;top:1063px;width:39px;height:14px;background:#fffde0;font-size:12px;line-height:16px;white-space:nowrap;padding-left:5px">Л.К.</div>
<div style="left:1173px;top:1063px;width:83px;height:14px;background:#fffde0;font-size:12px;line-height:16px;white-space:nowrap;padding-left:5px">Процессинг</div>
<div style="left:1322px;top:1063px;width:61px;height:14px;background:#fffde0;font-size:12px;line-height:16px;white-space:nowrap;padding-left:5px">Ц.склад</div>
<div style="left:1473px;top:1063px;width:61px;height:14px;background:#fffde0;font-size:12px;line-height:16px;white-space:nowrap;padding-left:5px">Магазин</div>
<div style="left:1622px;top:1063px;width:72px;height:14px;background:#fffde0;font-size:12px;line-height:16px;white-space:nowrap;padding-left:5px">Загрузка <b style="color:#d01010">2</b></div>
<div style="left:1772px;top:1063px;width:86px;height:14px;background:#fffde0;font-size:12px;line-height:16px;white-space:nowrap;padding-left:5px">АЗС <b style="color:#d01010">2</b> <b style="color:#5a90b8;font-weight:normal">1</b> 2856</div>
<div style="left:171px;top:144px;font-size:9.3px;line-height:11px;white-space:nowrap">"Servio Pump Office" : Отчет по средневзвешенной цене реализации</div>
<div style="left:1778px;top:144px;width:140px;overflow:hidden;font-size:9.3px;line-height:11px;white-space:nowrap">Составлен 09.10.2017 в 14:51:20</div>
<div style="left:856px;top:160px;width:400px;text-align:center;font-size:13.2px;font-weight:bold;line-height:15px;white-space:nowrap">Отчет по средневзвешенной цене реализации</div>
<div style="left:856px;top:181px;width:400px;text-align:center;font-size:10.6px;line-height:12px;white-space:pre">14.07.2017  -  09.08.2017 23:59:59</div>
<div style="left:856px;top:199px;width:400px;text-align:center;font-size:10.6px;line-height:12px;white-space:nowrap">Продукт: Аи-92</div>
<div style="left:169px;top:221px;width:1682px;height:72px;background:#f0f0f0"></div>
<div style="left:169px;top:633px;width:1682px;height:34px;background:#ccffcc"></div>
<div style="left:169px;top:837px;width:1682px;height:34px;background:#ccffcc"></div>
<div style="left:169px;top:871px;width:1682px;height:34px;background:#ffffcc"></div>
<div class="hd" style="left:169px;top:221px;width:94px;height:72px;padding-bottom:0px">Дата</div>
<div class="hd" style="left:263px;top:221px;width:397px;height:27px">Итого</div>
<div class="hd" style="left:263px;top:250px;width:84px;height:44px">Объем, литры</div>
<div class="hd" style="left:347px;top:250px;width:68px;height:44px">Объем,<br>тонны</div>
<div class="hd" style="left:415px;top:250px;width:94px;height:44px">Выручка от<br>реализации, руб.</div>
<div class="hd" style="left:509px;top:250px;width:76px;height:44px">Средневзве-<br>шенная цена,<br>руб./литр</div>
<div class="hd" style="left:585px;top:250px;width:75px;height:44px">Средневзве-<br>шенная цена,<br>руб./тонна</div>
<div class="hd" style="left:660px;top:221px;width:397px;height:27px">АЗС №1</div>
<div class="hd" style="left:660px;top:250px;width:83px;height:44px">Объем, литры</div>
<div class="hd" style="left:743px;top:250px;width:68px;height:44px">Объем,<br>тонны</div>
<div class="hd" style="left:811px;top:250px;width:95px;height:44px">Выручка от<br>реализации, руб.</div>
<div class="hd" style="left:906px;top:250px;width:75px;height:44px">Средневзве-<br>шенная цена,<br>руб./литр</div>
<div class="hd" style="left:981px;top:250px;width:76px;height:44px">Средневзве-<br>шенная цена,<br>руб./тонна</div>
<div class="hd" style="left:1057px;top:221px;width:397px;height:27px">АЗС №5</div>
<div class="hd" style="left:1057px;top:250px;width:83px;height:44px">Объем, литры</div>
<div class="hd" style="left:1140px;top:250px;width:68px;height:44px">Объем,<br>тонны</div>
<div class="hd" style="left:1208px;top:250px;width:95px;height:44px">Выручка от<br>реализации, руб.</div>
<div class="hd" style="left:1303px;top:250px;width:75px;height:44px">Средневзве-<br>шенная цена,<br>руб./литр</div>
<div class="hd" style="left:1378px;top:250px;width:76px;height:44px">Средневзве-<br>шенная цена,<br>руб./тонна</div>
<div class="hd" style="left:1454px;top:221px;width:397px;height:27px">АЗС №7</div>
<div class="hd" style="left:1454px;top:250px;width:83px;height:44px">Объем, литры</div>
<div class="hd" style="left:1537px;top:250px;width:68px;height:44px">Объем,<br>тонны</div>
<div class="hd" style="left:1605px;top:250px;width:95px;height:44px">Выручка от<br>реализации, руб.</div>
<div class="hd" style="left:1700px;top:250px;width:75px;height:44px">Средневзве-<br>шенная цена,<br>руб./литр</div>
<div class="hd" style="left:1775px;top:250px;width:76px;height:44px">Средневзве-<br>шенная цена,<br>руб./тонна</div>
<div class="rl" style="left:171px;top:294px;height:19px;line-height:19px">14.07.2017</div>
<div class="rc" style="left:264px;top:294px;width:81px;height:18px;line-height:19px;padding-right:0px">32409,34</div>
<div class="rc" style="left:348px;top:294px;width:62px;height:18px;line-height:19px;padding-right:0px">24,116</div>
<div class="rc" style="left:416px;top:294px;width:92px;height:18px;line-height:19px;padding-right:0.7px">1210349,62</div>
<div class="rc" style="left:510px;top:294px;width:74px;height:18px;line-height:19px;padding-right:0.7px">37,35</div>
<div class="rc" style="left:586px;top:294px;width:73px;height:18px;line-height:19px;padding-right:0.7px">50189,28</div>
<div class="rc" style="left:661px;top:294px;width:81px;height:18px;line-height:19px;padding-right:0.7px">20370,58</div>
<div class="rc" style="left:744px;top:294px;width:66px;height:18px;line-height:19px;padding-right:0.7px">15,148</div>
<div class="rc" style="left:812px;top:294px;width:93px;height:18px;line-height:19px;padding-right:0.7px">762634,04</div>
<div class="rc" style="left:907px;top:294px;width:73px;height:18px;line-height:19px;padding-right:0.7px">37,44</div>
<div class="rc" style="left:982px;top:294px;width:74px;height:18px;line-height:19px;padding-right:0.7px">50345,19</div>
<div class="rc" style="left:1058px;top:294px;width:81px;height:18px;line-height:19px;padding-right:0.7px">1891,54</div>
<div class="rc" style="left:1141px;top:294px;width:66px;height:18px;line-height:19px;padding-right:0.7px">1,384</div>
<div class="rc" style="left:1209px;top:294px;width:93px;height:18px;line-height:19px;padding-right:0.7px">70333,92</div>
<div class="rc" style="left:1304px;top:294px;width:73px;height:18px;line-height:19px;padding-right:0.7px">37,18</div>
<div class="rc" style="left:1379px;top:294px;width:74px;height:18px;line-height:19px;padding-right:0.7px">50804,62</div>
<div class="rc" style="left:1455px;top:294px;width:81px;height:18px;line-height:19px;padding-right:0.7px">10147,22</div>
<div class="rc" style="left:1538px;top:294px;width:66px;height:18px;line-height:19px;padding-right:0.7px">7,583</div>
<div class="rc" style="left:1606px;top:294px;width:93px;height:18px;line-height:19px;padding-right:0.7px">377381,66</div>
<div class="rc" style="left:1701px;top:294px;width:73px;height:18px;line-height:19px;padding-right:0.7px">37,19</div>
<div class="rc" style="left:1776px;top:294px;width:74px;height:18px;line-height:19px;padding-right:0.7px">49766,15</div>
<div class="rl" style="left:171px;top:313px;height:19px;line-height:19px">15.07.2017</div>
<div class="rc" style="left:264px;top:313px;width:81px;height:18px;line-height:19px;padding-right:0px">26398,52</div>
<div class="rc" style="left:348px;top:313px;width:62px;height:18px;line-height:19px;padding-right:0px">19,489</div>
<div class="rc" style="left:416px;top:313px;width:92px;height:18px;line-height:19px;padding-right:0.7px">985871,39</div>
<div class="rc" style="left:510px;top:313px;width:74px;height:18px;line-height:19px;padding-right:0.7px">37,35</div>
<div class="rc" style="left:586px;top:313px;width:73px;height:18px;line-height:19px;padding-right:0.7px">50585,52</div>
<div class="rc" style="left:661px;top:313px;width:81px;height:18px;line-height:19px;padding-right:0.7px">14341,47</div>
<div class="rc" style="left:744px;top:313px;width:66px;height:18px;line-height:19px;padding-right:0.7px">10,644</div>
<div class="rc" style="left:812px;top:313px;width:93px;height:18px;line-height:19px;padding-right:0.7px">537552,54</div>
<div class="rc" style="left:907px;top:313px;width:73px;height:18px;line-height:19px;padding-right:0.7px">37,48</div>
<div class="rc" style="left:982px;top:313px;width:74px;height:18px;line-height:19px;padding-right:0.7px">50501,92</div>
<div class="rc" style="left:1058px;top:313px;width:81px;height:18px;line-height:19px;padding-right:0.7px">5009,84</div>
<div class="rc" style="left:1141px;top:313px;width:66px;height:18px;line-height:19px;padding-right:0.7px">3,595</div>
<div class="rc" style="left:1209px;top:313px;width:93px;height:18px;line-height:19px;padding-right:0.7px">186225,28</div>
<div class="rc" style="left:1304px;top:313px;width:73px;height:18px;line-height:19px;padding-right:0.7px">37,17</div>
<div class="rc" style="left:1379px;top:313px;width:74px;height:18px;line-height:19px;padding-right:0.7px">51795,43</div>
<div class="rc" style="left:1455px;top:313px;width:81px;height:18px;line-height:19px;padding-right:0.7px">7047,21</div>
<div class="rc" style="left:1538px;top:313px;width:66px;height:18px;line-height:19px;padding-right:0.7px">5,250</div>
<div class="rc" style="left:1606px;top:313px;width:93px;height:18px;line-height:19px;padding-right:0.7px">262093,57</div>
<div class="rc" style="left:1701px;top:313px;width:73px;height:18px;line-height:19px;padding-right:0.7px">37,19</div>
<div class="rc" style="left:1776px;top:313px;width:74px;height:18px;line-height:19px;padding-right:0.7px">49927,34</div>
<div class="rl" style="left:171px;top:332px;height:19px;line-height:19px">16.07.2017</div>
<div class="rc" style="left:264px;top:332px;width:81px;height:18px;line-height:19px;padding-right:0px">19475,96</div>
<div class="rc" style="left:348px;top:332px;width:62px;height:18px;line-height:19px;padding-right:0px">14,339</div>
<div class="rc" style="left:416px;top:332px;width:92px;height:18px;line-height:19px;padding-right:0.7px">727302,49</div>
<div class="rc" style="left:510px;top:332px;width:74px;height:18px;line-height:19px;padding-right:0.7px">37,34</div>
<div class="rc" style="left:586px;top:332px;width:73px;height:18px;line-height:19px;padding-right:0.7px">50720,57</div>
<div class="rc" style="left:661px;top:332px;width:81px;height:18px;line-height:19px;padding-right:0.7px">10438,45</div>
<div class="rc" style="left:744px;top:332px;width:66px;height:18px;line-height:19px;padding-right:0.7px">7,731</div>
<div class="rc" style="left:812px;top:332px;width:93px;height:18px;line-height:19px;padding-right:0.7px">391256,55</div>
<div class="rc" style="left:907px;top:332px;width:73px;height:18px;line-height:19px;padding-right:0.7px">37,48</div>
<div class="rc" style="left:982px;top:332px;width:74px;height:18px;line-height:19px;padding-right:0.7px">50608,79</div>
<div class="rc" style="left:1058px;top:332px;width:81px;height:18px;line-height:19px;padding-right:0.7px">3187,25</div>
<div class="rc" style="left:1141px;top:332px;width:66px;height:18px;line-height:19px;padding-right:0.7px">2,268</div>
<div class="rc" style="left:1209px;top:332px;width:93px;height:18px;line-height:19px;padding-right:0.7px">118477,53</div>
<div class="rc" style="left:1304px;top:332px;width:73px;height:18px;line-height:19px;padding-right:0.7px">37,17</div>
<div class="rc" style="left:1379px;top:332px;width:74px;height:18px;line-height:19px;padding-right:0.7px">52241,07</div>
<div class="rc" style="left:1455px;top:332px;width:81px;height:18px;line-height:19px;padding-right:0.7px">5850,26</div>
<div class="rc" style="left:1538px;top:332px;width:66px;height:18px;line-height:19px;padding-right:0.7px">4,340</div>
<div class="rc" style="left:1606px;top:332px;width:93px;height:18px;line-height:19px;padding-right:0.7px">217568,41</div>
<div class="rc" style="left:1701px;top:332px;width:73px;height:18px;line-height:19px;padding-right:0.7px">37,19</div>
<div class="rc" style="left:1776px;top:332px;width:74px;height:18px;line-height:19px;padding-right:0.7px">50126,35</div>
<div class="rl" style="left:171px;top:351px;height:19px;line-height:19px">17.07.2017</div>
<div class="rc" style="left:264px;top:351px;width:81px;height:18px;line-height:19px;padding-right:0px">27906,85</div>
<div class="rc" style="left:348px;top:351px;width:62px;height:18px;line-height:19px;padding-right:0px">20,640</div>
<div class="rc" style="left:416px;top:351px;width:92px;height:18px;line-height:19px;padding-right:0.7px">1041737,81</div>
<div class="rc" style="left:510px;top:351px;width:74px;height:18px;line-height:19px;padding-right:0.7px">37,33</div>
<div class="rc" style="left:586px;top:351px;width:73px;height:18px;line-height:19px;padding-right:0.7px">50472,53</div>
<div class="rc" style="left:661px;top:351px;width:81px;height:18px;line-height:19px;padding-right:0.7px">15912,42</div>
<div class="rc" style="left:744px;top:351px;width:66px;height:18px;line-height:19px;padding-right:0.7px">11,776</div>
<div class="rc" style="left:812px;top:351px;width:93px;height:18px;line-height:19px;padding-right:0.7px">596440,37</div>
<div class="rc" style="left:907px;top:351px;width:73px;height:18px;line-height:19px;padding-right:0.7px">37,48</div>
<div class="rc" style="left:982px;top:351px;width:74px;height:18px;line-height:19px;padding-right:0.7px">50649,24</div>
<div class="rc" style="left:1058px;top:351px;width:81px;height:18px;line-height:19px;padding-right:0.7px">4313,41</div>
<div class="rc" style="left:1141px;top:351px;width:66px;height:18px;line-height:19px;padding-right:0.7px">3,165</div>
<div class="rc" style="left:1209px;top:351px;width:93px;height:18px;line-height:19px;padding-right:0.7px">159637,39</div>
<div class="rc" style="left:1304px;top:351px;width:73px;height:18px;line-height:19px;padding-right:0.7px">37,01</div>
<div class="rc" style="left:1379px;top:351px;width:74px;height:18px;line-height:19px;padding-right:0.7px">50441,54</div>
<div class="rc" style="left:1455px;top:351px;width:81px;height:18px;line-height:19px;padding-right:0.7px">7681,02</div>
<div class="rc" style="left:1538px;top:351px;width:66px;height:18px;line-height:19px;padding-right:0.7px">5,699</div>
<div class="rc" style="left:1606px;top:351px;width:93px;height:18px;line-height:19px;padding-right:0.7px">285660,05</div>
<div class="rc" style="left:1701px;top:351px;width:73px;height:18px;line-height:19px;padding-right:0.7px">37,19</div>
<div class="rc" style="left:1776px;top:351px;width:74px;height:18px;line-height:19px;padding-right:0.7px">50125,47</div>
<div class="rl" style="left:171px;top:370px;height:18px;line-height:18px">18.07.2017</div>
<div class="rc" style="left:264px;top:370px;width:81px;height:17px;line-height:18px;padding-right:0px">27340,54</div>
<div class="rc" style="left:348px;top:370px;width:62px;height:17px;line-height:18px;padding-right:0px">20,193</div>
<div class="rc" style="left:416px;top:370px;width:92px;height:17px;line-height:18px;padding-right:0.7px">1017837,50</div>
<div class="rc" style="left:510px;top:370px;width:74px;height:17px;line-height:18px;padding-right:0.7px">37,23</div>
<div class="rc" style="left:586px;top:370px;width:73px;height:17px;line-height:18px;padding-right:0.7px">50404,46</div>
<div class="rc" style="left:661px;top:370px;width:81px;height:17px;line-height:18px;padding-right:0.7px">14626,81</div>
<div class="rc" style="left:744px;top:370px;width:66px;height:17px;line-height:18px;padding-right:0.7px">10,808</div>
<div class="rc" style="left:812px;top:370px;width:93px;height:17px;line-height:18px;padding-right:0.7px">547255,04</div>
<div class="rc" style="left:907px;top:370px;width:73px;height:17px;line-height:18px;padding-right:0.7px">37,41</div>
<div class="rc" style="left:982px;top:370px;width:74px;height:17px;line-height:18px;padding-right:0.7px">50632,85</div>
<div class="rc" style="left:1058px;top:370px;width:81px;height:17px;line-height:18px;padding-right:0.7px">4929,32</div>
<div class="rc" style="left:1141px;top:370px;width:66px;height:17px;line-height:18px;padding-right:0.7px">3,608</div>
<div class="rc" style="left:1209px;top:370px;width:93px;height:17px;line-height:18px;padding-right:0.7px">181795,22</div>
<div class="rc" style="left:1304px;top:370px;width:73px;height:17px;line-height:18px;padding-right:0.7px">36,88</div>
<div class="rc" style="left:1379px;top:370px;width:74px;height:17px;line-height:18px;padding-right:0.7px">50379,72</div>
<div class="rc" style="left:1455px;top:370px;width:81px;height:17px;line-height:18px;padding-right:0.7px">7784,41</div>
<div class="rc" style="left:1538px;top:370px;width:66px;height:17px;line-height:18px;padding-right:0.7px">5,777</div>
<div class="rc" style="left:1606px;top:370px;width:93px;height:17px;line-height:18px;padding-right:0.7px">288787,24</div>
<div class="rc" style="left:1701px;top:370px;width:73px;height:17px;line-height:18px;padding-right:0.7px">37,10</div>
<div class="rc" style="left:1776px;top:370px;width:74px;height:17px;line-height:18px;padding-right:0.7px">49993,46</div>
<div class="rl" style="left:171px;top:388px;height:19px;line-height:19px">19.07.2017</div>
<div class="rc" style="left:264px;top:388px;width:81px;height:18px;line-height:19px;padding-right:0px">24527,41</div>
<div class="rc" style="left:348px;top:388px;width:62px;height:18px;line-height:19px;padding-right:0px">18,027</div>
<div class="rc" style="left:416px;top:388px;width:92px;height:18px;line-height:19px;padding-right:0.7px">913542,92</div>
<div class="rc" style="left:510px;top:388px;width:74px;height:18px;line-height:19px;padding-right:0.7px">37,25</div>
<div class="rc" style="left:586px;top:388px;width:73px;height:18px;line-height:19px;padding-right:0.7px">50676,37</div>
<div class="rc" style="left:661px;top:388px;width:81px;height:18px;line-height:19px;padding-right:0.7px">12287,36</div>
<div class="rc" style="left:744px;top:388px;width:66px;height:18px;line-height:19px;padding-right:0.7px">9,077</div>
<div class="rc" style="left:812px;top:388px;width:93px;height:18px;line-height:19px;padding-right:0.7px">459808,79</div>
<div class="rc" style="left:907px;top:388px;width:73px;height:18px;line-height:19px;padding-right:0.7px">37,42</div>
<div class="rc" style="left:982px;top:388px;width:74px;height:18px;line-height:19px;padding-right:0.7px">50654,80</div>
<div class="rc" style="left:1058px;top:388px;width:81px;height:18px;line-height:19px;padding-right:0.7px">4701,35</div>
<div class="rc" style="left:1141px;top:388px;width:66px;height:18px;line-height:19px;padding-right:0.7px">3,368</div>
<div class="rc" style="left:1209px;top:388px;width:93px;height:18px;line-height:19px;padding-right:0.7px">174105,15</div>
<div class="rc" style="left:1304px;top:388px;width:73px;height:18px;line-height:19px;padding-right:0.7px">37,03</div>
<div class="rc" style="left:1379px;top:388px;width:74px;height:18px;line-height:19px;padding-right:0.7px">51690,86</div>
<div class="rc" style="left:1455px;top:388px;width:81px;height:18px;line-height:19px;padding-right:0.7px">7538,70</div>
<div class="rc" style="left:1538px;top:388px;width:66px;height:18px;line-height:19px;padding-right:0.7px">5,581</div>
<div class="rc" style="left:1606px;top:388px;width:93px;height:18px;line-height:19px;padding-right:0.7px">279628,98</div>
<div class="rc" style="left:1701px;top:388px;width:73px;height:18px;line-height:19px;padding-right:0.7px">37,09</div>
<div class="rc" style="left:1776px;top:388px;width:74px;height:18px;line-height:19px;padding-right:0.7px">50101,05</div>
<div class="rl" style="left:171px;top:407px;height:19px;line-height:19px">20.07.2017</div>
<div class="rc" style="left:264px;top:407px;width:81px;height:18px;line-height:19px;padding-right:0px">24183,89</div>
<div class="rc" style="left:348px;top:407px;width:62px;height:18px;line-height:19px;padding-right:0px">17,829</div>
<div class="rc" style="left:416px;top:407px;width:92px;height:18px;line-height:19px;padding-right:0.7px">900058,17</div>
<div class="rc" style="left:510px;top:407px;width:74px;height:18px;line-height:19px;padding-right:0.7px">37,22</div>
<div class="rc" style="left:586px;top:407px;width:73px;height:18px;line-height:19px;padding-right:0.7px">50482,54</div>
<div class="rc" style="left:661px;top:407px;width:81px;height:18px;line-height:19px;padding-right:0.7px">12025,33</div>
<div class="rc" style="left:744px;top:407px;width:66px;height:18px;line-height:19px;padding-right:0.7px">8,873</div>
<div class="rc" style="left:812px;top:407px;width:93px;height:18px;line-height:19px;padding-right:0.7px">450746,38</div>
<div class="rc" style="left:907px;top:407px;width:73px;height:18px;line-height:19px;padding-right:0.7px">37,48</div>
<div class="rc" style="left:982px;top:407px;width:74px;height:18px;line-height:19px;padding-right:0.7px">50801,49</div>
<div class="rc" style="left:1058px;top:407px;width:81px;height:18px;line-height:19px;padding-right:0.7px">4998,74</div>
<div class="rc" style="left:1141px;top:407px;width:66px;height:18px;line-height:19px;padding-right:0.7px">3,654</div>
<div class="rc" style="left:1209px;top:407px;width:93px;height:18px;line-height:19px;padding-right:0.7px">184516,49</div>
<div class="rc" style="left:1304px;top:407px;width:73px;height:18px;line-height:19px;padding-right:0.7px">36,91</div>
<div class="rc" style="left:1379px;top:407px;width:74px;height:18px;line-height:19px;padding-right:0.7px">50494,36</div>
<div class="rc" style="left:1455px;top:407px;width:81px;height:18px;line-height:19px;padding-right:0.7px">7159,82</div>
<div class="rc" style="left:1538px;top:407px;width:66px;height:18px;line-height:19px;padding-right:0.7px">5,302</div>
<div class="rc" style="left:1606px;top:407px;width:93px;height:18px;line-height:19px;padding-right:0.7px">264795,30</div>
<div class="rc" style="left:1701px;top:407px;width:73px;height:18px;line-height:19px;padding-right:0.7px">36,98</div>
<div class="rc" style="left:1776px;top:407px;width:74px;height:18px;line-height:19px;padding-right:0.7px">49941,59</div>
<div class="rl" style="left:171px;top:426px;height:19px;line-height:19px">21.07.2017</div>
<div class="rc" style="left:264px;top:426px;width:81px;height:18px;line-height:19px;padding-right:0px">31568,61</div>
<div class="rc" style="left:348px;top:426px;width:62px;height:18px;line-height:19px;padding-right:0px">23,265</div>
<div class="rc" style="left:416px;top:426px;width:92px;height:18px;line-height:19px;padding-right:0.7px">1175377,93</div>
<div class="rc" style="left:510px;top:426px;width:74px;height:18px;line-height:19px;padding-right:0.7px">37,23</div>
<div class="rc" style="left:586px;top:426px;width:73px;height:18px;line-height:19px;padding-right:0.7px">50521,73</div>
<div class="rc" style="left:661px;top:426px;width:81px;height:18px;line-height:19px;padding-right:0.7px">17472,02</div>
<div class="rc" style="left:744px;top:426px;width:66px;height:18px;line-height:19px;padding-right:0.7px">12,900</div>
<div class="rc" style="left:812px;top:426px;width:93px;height:18px;line-height:19px;padding-right:0.7px">652647,96</div>
<div class="rc" style="left:907px;top:426px;width:73px;height:18px;line-height:19px;padding-right:0.7px">37,35</div>
<div class="rc" style="left:982px;top:426px;width:74px;height:18px;line-height:19px;padding-right:0.7px">50593,26</div>
<div class="rc" style="left:1058px;top:426px;width:81px;height:18px;line-height:19px;padding-right:0.7px">5637,53</div>
<div class="rc" style="left:1141px;top:426px;width:66px;height:18px;line-height:19px;padding-right:0.7px">4,108</div>
<div class="rc" style="left:1209px;top:426px;width:93px;height:18px;line-height:19px;padding-right:0.7px">209619,30</div>
<div class="rc" style="left:1304px;top:426px;width:73px;height:18px;line-height:19px;padding-right:0.7px">37,18</div>
<div class="rc" style="left:1379px;top:426px;width:74px;height:18px;line-height:19px;padding-right:0.7px">51022,13</div>
<div class="rc" style="left:1455px;top:426px;width:81px;height:18px;line-height:19px;padding-right:0.7px">8459,06</div>
<div class="rc" style="left:1538px;top:426px;width:66px;height:18px;line-height:19px;padding-right:0.7px">6,256</div>
<div class="rc" style="left:1606px;top:426px;width:93px;height:18px;line-height:19px;padding-right:0.7px">313110,67</div>
<div class="rc" style="left:1701px;top:426px;width:73px;height:18px;line-height:19px;padding-right:0.7px">37,01</div>
<div class="rc" style="left:1776px;top:426px;width:74px;height:18px;line-height:19px;padding-right:0.7px">50046,46</div>
<div class="rl" style="left:171px;top:445px;height:19px;line-height:19px">22.07.2017</div>
<div class="rc" style="left:264px;top:445px;width:81px;height:18px;line-height:19px;padding-right:0px">26575,73</div>
<div class="rc" style="left:348px;top:445px;width:62px;height:18px;line-height:19px;padding-right:0px">19,541</div>
<div class="rc" style="left:416px;top:445px;width:92px;height:18px;line-height:19px;padding-right:0.7px">990221,60</div>
<div class="rc" style="left:510px;top:445px;width:74px;height:18px;line-height:19px;padding-right:0.7px">37,26</div>
<div class="rc" style="left:586px;top:445px;width:73px;height:18px;line-height:19px;padding-right:0.7px">50673,53</div>
<div class="rc" style="left:661px;top:445px;width:81px;height:18px;line-height:19px;padding-right:0.7px">14201,50</div>
<div class="rc" style="left:744px;top:445px;width:66px;height:18px;line-height:19px;padding-right:0.7px">10,496</div>
<div class="rc" style="left:812px;top:445px;width:93px;height:18px;line-height:19px;padding-right:0.7px">530799,72</div>
<div class="rc" style="left:907px;top:445px;width:73px;height:18px;line-height:19px;padding-right:0.7px">37,38</div>
<div class="rc" style="left:982px;top:445px;width:74px;height:18px;line-height:19px;padding-right:0.7px">50571,62</div>
<div class="rc" style="left:1058px;top:445px;width:81px;height:18px;line-height:19px;padding-right:0.7px">4848,43</div>
<div class="rc" style="left:1141px;top:445px;width:66px;height:18px;line-height:19px;padding-right:0.7px">3,478</div>
<div class="rc" style="left:1209px;top:445px;width:93px;height:18px;line-height:19px;padding-right:0.7px">179527,97</div>
<div class="rc" style="left:1304px;top:445px;width:73px;height:18px;line-height:19px;padding-right:0.7px">37,03</div>
<div class="rc" style="left:1379px;top:445px;width:74px;height:18px;line-height:19px;padding-right:0.7px">51610,74</div>
<div class="rc" style="left:1455px;top:445px;width:81px;height:18px;line-height:19px;padding-right:0.7px">7525,80</div>
<div class="rc" style="left:1538px;top:445px;width:66px;height:18px;line-height:19px;padding-right:0.7px">5,567</div>
<div class="rc" style="left:1606px;top:445px;width:93px;height:18px;line-height:19px;padding-right:0.7px">279893,91</div>
<div class="rc" style="left:1701px;top:445px;width:73px;height:18px;line-height:19px;padding-right:0.7px">37,19</div>
<div class="rc" style="left:1776px;top:445px;width:74px;height:18px;line-height:19px;padding-right:0.7px">50280,04</div>
<div class="rl" style="left:171px;top:464px;height:19px;line-height:19px">23.07.2017</div>
<div class="rc" style="left:264px;top:464px;width:81px;height:18px;line-height:19px;padding-right:0px">18461,43</div>
<div class="rc" style="left:348px;top:464px;width:62px;height:18px;line-height:19px;padding-right:0px">13,655</div>
<div class="rc" style="left:416px;top:464px;width:92px;height:18px;line-height:19px;padding-right:0.7px">686098,18</div>
<div class="rc" style="left:510px;top:464px;width:74px;height:18px;line-height:19px;padding-right:0.7px">37,16</div>
<div class="rc" style="left:586px;top:464px;width:73px;height:18px;line-height:19px;padding-right:0.7px">50244,83</div>
<div class="rc" style="left:661px;top:464px;width:81px;height:18px;line-height:19px;padding-right:0.7px">12411,59</div>
<div class="rc" style="left:744px;top:464px;width:66px;height:18px;line-height:19px;padding-right:0.7px">9,176</div>
<div class="rc" style="left:812px;top:464px;width:93px;height:18px;line-height:19px;padding-right:0.7px">462590,07</div>
<div class="rc" style="left:907px;top:464px;width:73px;height:18px;line-height:19px;padding-right:0.7px">37,27</div>
<div class="rc" style="left:982px;top:464px;width:74px;height:18px;line-height:19px;padding-right:0.7px">50412,49</div>
<div class="rc" style="left:1058px;top:464px;width:81px;height:18px;line-height:19px;padding-right:0.7px">882,53</div>
<div class="rc" style="left:1141px;top:464px;width:66px;height:18px;line-height:19px;padding-right:0.7px">0,657</div>
<div class="rc" style="left:1209px;top:464px;width:93px;height:18px;line-height:19px;padding-right:0.7px">31328,03</div>
<div class="rc" style="left:1304px;top:464px;width:73px;height:18px;line-height:19px;padding-right:0.7px">35,50</div>
<div class="rc" style="left:1379px;top:464px;width:74px;height:18px;line-height:19px;padding-right:0.7px">47654,44</div>
<div class="rc" style="left:1455px;top:464px;width:81px;height:18px;line-height:19px;padding-right:0.7px">5167,31</div>
<div class="rc" style="left:1538px;top:464px;width:66px;height:18px;line-height:19px;padding-right:0.7px">3,821</div>
<div class="rc" style="left:1606px;top:464px;width:93px;height:18px;line-height:19px;padding-right:0.7px">192180,08</div>
<div class="rc" style="left:1701px;top:464px;width:73px;height:18px;line-height:19px;padding-right:0.7px">37,19</div>
<div class="rc" style="left:1776px;top:464px;width:74px;height:18px;line-height:19px;padding-right:0.7px">50289,17</div>
<div class="rl" style="left:171px;top:483px;height:19px;line-height:19px">24.07.2017</div>
<div class="rc" style="left:264px;top:483px;width:81px;height:18px;line-height:19px;padding-right:0px">24141,13</div>
<div class="rc" style="left:348px;top:483px;width:62px;height:18px;line-height:19px;padding-right:0px">17,806</div>
<div class="rc" style="left:416px;top:483px;width:92px;height:18px;line-height:19px;padding-right:0.7px">900326,12</div>
<div class="rc" style="left:510px;top:483px;width:74px;height:18px;line-height:19px;padding-right:0.7px">37,29</div>
<div class="rc" style="left:586px;top:483px;width:73px;height:18px;line-height:19px;padding-right:0.7px">50561,94</div>
<div class="rc" style="left:661px;top:483px;width:81px;height:18px;line-height:19px;padding-right:0.7px">16264,78</div>
<div class="rc" style="left:744px;top:483px;width:66px;height:18px;line-height:19px;padding-right:0.7px">12,010</div>
<div class="rc" style="left:812px;top:483px;width:93px;height:18px;line-height:19px;padding-right:0.7px">607404,85</div>
<div class="rc" style="left:907px;top:483px;width:73px;height:18px;line-height:19px;padding-right:0.7px">37,34</div>
<div class="rc" style="left:982px;top:483px;width:74px;height:18px;line-height:19px;padding-right:0.7px">50576,19</div>
<div class="rc" style="left:1058px;top:483px;width:81px;height:18px;line-height:19px;padding-right:0.7px">685,43</div>
<div class="rc" style="left:1141px;top:483px;width:66px;height:18px;line-height:19px;padding-right:0.7px">0,478</div>
<div class="rc" style="left:1209px;top:483px;width:93px;height:18px;line-height:19px;padding-right:0.7px">25484,15</div>
<div class="rc" style="left:1304px;top:483px;width:73px;height:18px;line-height:19px;padding-right:0.7px">37,18</div>
<div class="rc" style="left:1379px;top:483px;width:74px;height:18px;line-height:19px;padding-right:0.7px">53325,28</div>
<div class="rc" style="left:1455px;top:483px;width:81px;height:18px;line-height:19px;padding-right:0.7px">7190,92</div>
<div class="rc" style="left:1538px;top:483px;width:66px;height:18px;line-height:19px;padding-right:0.7px">5,319</div>
<div class="rc" style="left:1606px;top:483px;width:93px;height:18px;line-height:19px;padding-right:0.7px">267437,12</div>
<div class="rc" style="left:1701px;top:483px;width:73px;height:18px;line-height:19px;padding-right:0.7px">37,19</div>
<div class="rc" style="left:1776px;top:483px;width:74px;height:18px;line-height:19px;padding-right:0.7px">50282,42</div>
<div class="rl" style="left:171px;top:502px;height:19px;line-height:19px">25.07.2017</div>
<div class="rc" style="left:264px;top:502px;width:81px;height:18px;line-height:19px;padding-right:0px">24059,76</div>
<div class="rc" style="left:348px;top:502px;width:62px;height:18px;line-height:19px;padding-right:0px">17,780</div>
<div class="rc" style="left:416px;top:502px;width:92px;height:18px;line-height:19px;padding-right:0.7px">896449,99</div>
<div class="rc" style="left:510px;top:502px;width:74px;height:18px;line-height:19px;padding-right:0.7px">37,26</div>
<div class="rc" style="left:586px;top:502px;width:73px;height:18px;line-height:19px;padding-right:0.7px">50419,29</div>
<div class="rc" style="left:661px;top:502px;width:81px;height:18px;line-height:19px;padding-right:0.7px">15957,31</div>
<div class="rc" style="left:744px;top:502px;width:66px;height:18px;line-height:19px;padding-right:0.7px">11,785</div>
<div class="rc" style="left:812px;top:502px;width:93px;height:18px;line-height:19px;padding-right:0.7px">595861,88</div>
<div class="rc" style="left:907px;top:502px;width:73px;height:18px;line-height:19px;padding-right:0.7px">37,34</div>
<div class="rc" style="left:982px;top:502px;width:74px;height:18px;line-height:19px;padding-right:0.7px">50559,75</div>
<div class="rc" style="left:1058px;top:502px;width:81px;height:18px;line-height:19px;padding-right:0.7px">828,48</div>
<div class="rc" style="left:1141px;top:502px;width:66px;height:18px;line-height:19px;padding-right:0.7px">0,618</div>
<div class="rc" style="left:1209px;top:502px;width:93px;height:18px;line-height:19px;padding-right:0.7px">30804,49</div>
<div class="rc" style="left:1304px;top:502px;width:73px;height:18px;line-height:19px;padding-right:0.7px">37,18</div>
<div class="rc" style="left:1379px;top:502px;width:74px;height:18px;line-height:19px;padding-right:0.7px">49861,59</div>
<div class="rc" style="left:1455px;top:502px;width:81px;height:18px;line-height:19px;padding-right:0.7px">7273,97</div>
<div class="rc" style="left:1538px;top:502px;width:66px;height:18px;line-height:19px;padding-right:0.7px">5,377</div>
<div class="rc" style="left:1606px;top:502px;width:93px;height:18px;line-height:19px;padding-right:0.7px">269783,62</div>
<div class="rc" style="left:1701px;top:502px;width:73px;height:18px;line-height:19px;padding-right:0.7px">37,09</div>
<div class="rc" style="left:1776px;top:502px;width:74px;height:18px;line-height:19px;padding-right:0.7px">50175,50</div>
<div class="rl" style="left:171px;top:521px;height:19px;line-height:19px">26.07.2017</div>
<div class="rc" style="left:264px;top:521px;width:81px;height:18px;line-height:19px;padding-right:0px">24581,80</div>
<div class="rc" style="left:348px;top:521px;width:62px;height:18px;line-height:19px;padding-right:0px">18,100</div>
<div class="rc" style="left:416px;top:521px;width:92px;height:18px;line-height:19px;padding-right:0.7px">914583,76</div>
<div class="rc" style="left:510px;top:521px;width:74px;height:18px;line-height:19px;padding-right:0.7px">37,21</div>
<div class="rc" style="left:586px;top:521px;width:73px;height:18px;line-height:19px;padding-right:0.7px">50528,65</div>
<div class="rc" style="left:661px;top:521px;width:81px;height:18px;line-height:19px;padding-right:0.7px">16709,61</div>
<div class="rc" style="left:744px;top:521px;width:66px;height:18px;line-height:19px;padding-right:0.7px">12,346</div>
<div class="rc" style="left:812px;top:521px;width:93px;height:18px;line-height:19px;padding-right:0.7px">622560,22</div>
<div class="rc" style="left:907px;top:521px;width:73px;height:18px;line-height:19px;padding-right:0.7px">37,26</div>
<div class="rc" style="left:982px;top:521px;width:74px;height:18px;line-height:19px;padding-right:0.7px">50425,25</div>
<div class="rc" style="left:1058px;top:521px;width:81px;height:18px;line-height:19px;padding-right:0.7px">992,47</div>
<div class="rc" style="left:1141px;top:521px;width:66px;height:18px;line-height:19px;padding-right:0.7px">0,666</div>
<div class="rc" style="left:1209px;top:521px;width:93px;height:18px;line-height:19px;padding-right:0.7px">36904,38</div>
<div class="rc" style="left:1304px;top:521px;width:73px;height:18px;line-height:19px;padding-right:0.7px">37,18</div>
<div class="rc" style="left:1379px;top:521px;width:74px;height:18px;line-height:19px;padding-right:0.7px">55370,41</div>
<div class="rc" style="left:1455px;top:521px;width:81px;height:18px;line-height:19px;padding-right:0.7px">6879,72</div>
<div class="rc" style="left:1538px;top:521px;width:66px;height:18px;line-height:19px;padding-right:0.7px">5,088</div>
<div class="rc" style="left:1606px;top:521px;width:93px;height:18px;line-height:19px;padding-right:0.7px">255119,16</div>
<div class="rc" style="left:1701px;top:521px;width:73px;height:18px;line-height:19px;padding-right:0.7px">37,08</div>
<div class="rc" style="left:1776px;top:521px;width:74px;height:18px;line-height:19px;padding-right:0.7px">50145,29</div>
<div class="rl" style="left:171px;top:540px;height:18px;line-height:18px">27.07.2017</div>
<div class="rc" style="left:264px;top:540px;width:81px;height:17px;line-height:18px;padding-right:0px">24612,28</div>
<div class="rc" style="left:348px;top:540px;width:62px;height:17px;line-height:18px;padding-right:0px">18,209</div>
<div class="rc" style="left:416px;top:540px;width:92px;height:17px;line-height:18px;padding-right:0.7px">917909,45</div>
<div class="rc" style="left:510px;top:540px;width:74px;height:17px;line-height:18px;padding-right:0.7px">37,29</div>
<div class="rc" style="left:586px;top:540px;width:73px;height:17px;line-height:18px;padding-right:0.7px">50408,27</div>
<div class="rc" style="left:661px;top:540px;width:81px;height:17px;line-height:18px;padding-right:0.7px">16504,76</div>
<div class="rc" style="left:744px;top:540px;width:66px;height:17px;line-height:18px;padding-right:0.7px">12,208</div>
<div class="rc" style="left:812px;top:540px;width:93px;height:17px;line-height:18px;padding-right:0.7px">617136,29</div>
<div class="rc" style="left:907px;top:540px;width:73px;height:17px;line-height:18px;padding-right:0.7px">37,39</div>
<div class="rc" style="left:982px;top:540px;width:74px;height:17px;line-height:18px;padding-right:0.7px">50553,04</div>
<div class="rc" style="left:1058px;top:540px;width:81px;height:17px;line-height:18px;padding-right:0.7px">799,71</div>
<div class="rc" style="left:1141px;top:540px;width:66px;height:17px;line-height:18px;padding-right:0.7px">0,597</div>
<div class="rc" style="left:1209px;top:540px;width:93px;height:17px;line-height:18px;padding-right:0.7px">29734,32</div>
<div class="rc" style="left:1304px;top:540px;width:73px;height:17px;line-height:18px;padding-right:0.7px">37,18</div>
<div class="rc" style="left:1379px;top:540px;width:74px;height:17px;line-height:18px;padding-right:0.7px">49839,62</div>
<div class="rc" style="left:1455px;top:540px;width:81px;height:17px;line-height:18px;padding-right:0.7px">7307,81</div>
<div class="rc" style="left:1538px;top:540px;width:66px;height:17px;line-height:18px;padding-right:0.7px">5,405</div>
<div class="rc" style="left:1606px;top:540px;width:93px;height:17px;line-height:18px;padding-right:0.7px">271038,84</div>
<div class="rc" style="left:1701px;top:540px;width:73px;height:17px;line-height:18px;padding-right:0.7px">37,09</div>
<div class="rc" style="left:1776px;top:540px;width:74px;height:17px;line-height:18px;padding-right:0.7px">50145,02</div>
<div class="rl" style="left:171px;top:558px;height:19px;line-height:19px">28.07.2017</div>
<div class="rc" style="left:264px;top:558px;width:81px;height:18px;line-height:19px;padding-right:0px">26905,35</div>
<div class="rc" style="left:348px;top:558px;width:62px;height:18px;line-height:19px;padding-right:0px">19,874</div>
<div class="rc" style="left:416px;top:558px;width:92px;height:18px;line-height:19px;padding-right:0.7px">1003961,06</div>
<div class="rc" style="left:510px;top:558px;width:74px;height:18px;line-height:19px;padding-right:0.7px">37,31</div>
<div class="rc" style="left:586px;top:558px;width:73px;height:18px;line-height:19px;padding-right:0.7px">50517,32</div>
<div class="rc" style="left:661px;top:558px;width:81px;height:18px;line-height:19px;padding-right:0.7px">17848,42</div>
<div class="rc" style="left:744px;top:558px;width:66px;height:18px;line-height:19px;padding-right:0.7px">13,185</div>
<div class="rc" style="left:812px;top:558px;width:93px;height:18px;line-height:19px;padding-right:0.7px">667515,17</div>
<div class="rc" style="left:907px;top:558px;width:73px;height:18px;line-height:19px;padding-right:0.7px">37,40</div>
<div class="rc" style="left:982px;top:558px;width:74px;height:18px;line-height:19px;padding-right:0.7px">50626,48</div>
<div class="rc" style="left:1058px;top:558px;width:81px;height:18px;line-height:19px;padding-right:0.7px">1013,77</div>
<div class="rc" style="left:1141px;top:558px;width:66px;height:18px;line-height:19px;padding-right:0.7px">0,737</div>
<div class="rc" style="left:1209px;top:558px;width:93px;height:18px;line-height:19px;padding-right:0.7px">37311,15</div>
<div class="rc" style="left:1304px;top:558px;width:73px;height:18px;line-height:19px;padding-right:0.7px">36,80</div>
<div class="rc" style="left:1379px;top:558px;width:74px;height:18px;line-height:19px;padding-right:0.7px">50660,08</div>
<div class="rc" style="left:1455px;top:558px;width:81px;height:18px;line-height:19px;padding-right:0.7px">8043,16</div>
<div class="rc" style="left:1538px;top:558px;width:66px;height:18px;line-height:19px;padding-right:0.7px">5,952</div>
<div class="rc" style="left:1606px;top:558px;width:93px;height:18px;line-height:19px;padding-right:0.7px">299134,74</div>
<div class="rc" style="left:1701px;top:558px;width:73px;height:18px;line-height:19px;padding-right:0.7px">37,19</div>
<div class="rc" style="left:1776px;top:558px;width:74px;height:18px;line-height:19px;padding-right:0.7px">50258,70</div>
<div class="rl" style="left:171px;top:577px;height:19px;line-height:19px">29.07.2017</div>
<div class="rc" style="left:264px;top:577px;width:81px;height:18px;line-height:19px;padding-right:0px">24289,01</div>
<div class="rc" style="left:348px;top:577px;width:62px;height:18px;line-height:19px;padding-right:0px">17,938</div>
<div class="rc" style="left:416px;top:577px;width:92px;height:18px;line-height:19px;padding-right:0.7px">904262,43</div>
<div class="rc" style="left:510px;top:577px;width:74px;height:18px;line-height:19px;padding-right:0.7px">37,23</div>
<div class="rc" style="left:586px;top:577px;width:73px;height:18px;line-height:19px;padding-right:0.7px">50409,31</div>
<div class="rc" style="left:661px;top:577px;width:81px;height:18px;line-height:19px;padding-right:0.7px">16061,29</div>
<div class="rc" style="left:744px;top:577px;width:66px;height:18px;line-height:19px;padding-right:0.7px">11,851</div>
<div class="rc" style="left:812px;top:577px;width:93px;height:18px;line-height:19px;padding-right:0.7px">599015,28</div>
<div class="rc" style="left:907px;top:577px;width:73px;height:18px;line-height:19px;padding-right:0.7px">37,30</div>
<div class="rc" style="left:982px;top:577px;width:74px;height:18px;line-height:19px;padding-right:0.7px">50546,40</div>
<div class="rc" style="left:1058px;top:577px;width:81px;height:18px;line-height:19px;padding-right:0.7px">868,54</div>
<div class="rc" style="left:1141px;top:577px;width:66px;height:18px;line-height:19px;padding-right:0.7px">0,648</div>
<div class="rc" style="left:1209px;top:577px;width:93px;height:18px;line-height:19px;padding-right:0.7px">32292,84</div>
<div class="rc" style="left:1304px;top:577px;width:73px;height:18px;line-height:19px;padding-right:0.7px">37,18</div>
<div class="rc" style="left:1379px;top:577px;width:74px;height:18px;line-height:19px;padding-right:0.7px">49819,25</div>
<div class="rc" style="left:1455px;top:577px;width:81px;height:18px;line-height:19px;padding-right:0.7px">7359,18</div>
<div class="rc" style="left:1538px;top:577px;width:66px;height:18px;line-height:19px;padding-right:0.7px">5,439</div>
<div class="rc" style="left:1606px;top:577px;width:93px;height:18px;line-height:19px;padding-right:0.7px">272954,31</div>
<div class="rc" style="left:1701px;top:577px;width:73px;height:18px;line-height:19px;padding-right:0.7px">37,09</div>
<div class="rc" style="left:1776px;top:577px;width:74px;height:18px;line-height:19px;padding-right:0.7px">50181,88</div>
<div class="rl" style="left:171px;top:596px;height:19px;line-height:19px">30.07.2017</div>
<div class="rc" style="left:264px;top:596px;width:81px;height:18px;line-height:19px;padding-right:0px">18715,08</div>
<div class="rc" style="left:348px;top:596px;width:62px;height:18px;line-height:19px;padding-right:0px">13,821</div>
<div class="rc" style="left:416px;top:596px;width:92px;height:18px;line-height:19px;padding-right:0.7px">697256,10</div>
<div class="rc" style="left:510px;top:596px;width:74px;height:18px;line-height:19px;padding-right:0.7px">37,26</div>
<div class="rc" style="left:586px;top:596px;width:73px;height:18px;line-height:19px;padding-right:0.7px">50449,76</div>
<div class="rc" style="left:661px;top:596px;width:81px;height:18px;line-height:19px;padding-right:0.7px">11916,50</div>
<div class="rc" style="left:744px;top:596px;width:66px;height:18px;line-height:19px;padding-right:0.7px">8,788</div>
<div class="rc" style="left:812px;top:596px;width:93px;height:18px;line-height:19px;padding-right:0.7px">446654,41</div>
<div class="rc" style="left:907px;top:596px;width:73px;height:18px;line-height:19px;padding-right:0.7px">37,48</div>
<div class="rc" style="left:982px;top:596px;width:74px;height:18px;line-height:19px;padding-right:0.7px">50827,23</div>
<div class="rc" style="left:1058px;top:596px;width:81px;height:18px;line-height:19px;padding-right:0.7px">677,01</div>
<div class="rc" style="left:1141px;top:596px;width:66px;height:18px;line-height:19px;padding-right:0.7px">0,505</div>
<div class="rc" style="left:1209px;top:596px;width:93px;height:18px;line-height:19px;padding-right:0.7px">25171,10</div>
<div class="rc" style="left:1304px;top:596px;width:73px;height:18px;line-height:19px;padding-right:0.7px">37,18</div>
<div class="rc" style="left:1379px;top:596px;width:74px;height:18px;line-height:19px;padding-right:0.7px">49814,17</div>
<div class="rc" style="left:1455px;top:596px;width:81px;height:18px;line-height:19px;padding-right:0.7px">6121,57</div>
<div class="rc" style="left:1538px;top:596px;width:66px;height:18px;line-height:19px;padding-right:0.7px">4,528</div>
<div class="rc" style="left:1606px;top:596px;width:93px;height:18px;line-height:19px;padding-right:0.7px">225430,59</div>
<div class="rc" style="left:1701px;top:596px;width:73px;height:18px;line-height:19px;padding-right:0.7px">36,83</div>
<div class="rc" style="left:1776px;top:596px;width:74px;height:18px;line-height:19px;padding-right:0.7px">49789,21</div>
<div class="rl" style="left:171px;top:615px;height:19px;line-height:19px">31.07.2017</div>
<div class="rc" style="left:264px;top:615px;width:81px;height:18px;line-height:19px;padding-right:0px">22057,16</div>
<div class="rc" style="left:348px;top:615px;width:62px;height:18px;line-height:19px;padding-right:0px">16,273</div>
<div class="rc" style="left:416px;top:615px;width:92px;height:18px;line-height:19px;padding-right:0.7px">823929,00</div>
<div class="rc" style="left:510px;top:615px;width:74px;height:18px;line-height:19px;padding-right:0.7px">37,35</div>
<div class="rc" style="left:586px;top:615px;width:73px;height:18px;line-height:19px;padding-right:0.7px">50630,73</div>
<div class="rc" style="left:661px;top:615px;width:81px;height:18px;line-height:19px;padding-right:0.7px">14956,84</div>
<div class="rc" style="left:744px;top:615px;width:66px;height:18px;line-height:19px;padding-right:0.7px">11,025</div>
<div class="rc" style="left:812px;top:615px;width:93px;height:18px;line-height:19px;padding-right:0.7px">559864,72</div>
<div class="rc" style="left:907px;top:615px;width:73px;height:18px;line-height:19px;padding-right:0.7px">37,43</div>
<div class="rc" style="left:982px;top:615px;width:74px;height:18px;line-height:19px;padding-right:0.7px">50780,46</div>
<div class="rc" style="left:1058px;top:615px;width:81px;height:18px;line-height:19px;padding-right:0.7px">578,19</div>
<div class="rc" style="left:1141px;top:615px;width:66px;height:18px;line-height:19px;padding-right:0.7px">0,432</div>
<div class="rc" style="left:1209px;top:615px;width:93px;height:18px;line-height:19px;padding-right:0.7px">21498,54</div>
<div class="rc" style="left:1304px;top:615px;width:73px;height:18px;line-height:19px;padding-right:0.7px">37,18</div>
<div class="rc" style="left:1379px;top:615px;width:74px;height:18px;line-height:19px;padding-right:0.7px">49799,72</div>
<div class="rc" style="left:1455px;top:615px;width:81px;height:18px;line-height:19px;padding-right:0.7px">6522,13</div>
<div class="rc" style="left:1538px;top:615px;width:66px;height:18px;line-height:19px;padding-right:0.7px">4,816</div>
<div class="rc" style="left:1606px;top:615px;width:93px;height:18px;line-height:19px;padding-right:0.7px">242565,74</div>
<div class="rc" style="left:1701px;top:615px;width:73px;height:18px;line-height:19px;padding-right:0.7px">37,19</div>
<div class="rc" style="left:1776px;top:615px;width:74px;height:18px;line-height:19px;padding-right:0.7px">50363,50</div>
<div style="left:171px;top:635px;height:34px;width:92px;font-size:10.5px;font-weight:bold;line-height:11.4px;display:flex;align-items:center;white-space:nowrap">Итог за июль<br>2017</div>
<div class="rc" style="left:264px;top:634px;width:81px;height:34px;line-height:34px;font-weight:bold;font-size:10.5px;padding-right:0px">448209,85</div>
<div class="rc" style="left:348px;top:634px;width:64px;height:34px;line-height:34px;font-weight:bold;font-size:10.5px;padding-right:0px">330,897</div>
<div class="rc" style="left:416px;top:634px;width:92px;height:34px;line-height:34px;font-weight:bold;font-size:10.5px;padding-right:1.5px">16707075,52</div>
<div class="rc" style="left:510px;top:634px;width:74px;height:34px;line-height:34px;font-weight:bold;font-size:10.5px;padding-right:1.5px">37,28</div>
<div class="rc" style="left:586px;top:634px;width:73px;height:34px;line-height:34px;font-weight:bold;font-size:10.5px;padding-right:1.5px">50490,29</div>
<div class="rc" style="left:661px;top:634px;width:81px;height:34px;line-height:34px;font-weight:bold;font-size:10.5px;padding-right:1.5px">270307,04</div>
<div class="rc" style="left:744px;top:634px;width:66px;height:34px;line-height:34px;font-weight:bold;font-size:10.5px;padding-right:1.5px">199,827</div>
<div class="rc" style="left:812px;top:634px;width:93px;height:34px;line-height:34px;font-weight:bold;font-size:10.5px;padding-right:1.5px">10107744,28</div>
<div class="rc" style="left:907px;top:634px;width:73px;height:34px;line-height:34px;font-weight:bold;font-size:10.5px;padding-right:1.5px">37,40</div>
<div class="rc" style="left:982px;top:634px;width:74px;height:34px;line-height:34px;font-weight:bold;font-size:10.5px;padding-right:1.5px">50592,58</div>
<div class="rc" style="left:1058px;top:634px;width:81px;height:34px;line-height:34px;font-weight:bold;font-size:10.5px;padding-right:1.5px">46843,54</div>
<div class="rc" style="left:1141px;top:634px;width:66px;height:34px;line-height:34px;font-weight:bold;font-size:10.5px;padding-right:1.5px">33,968</div>
<div class="rc" style="left:1209px;top:634px;width:93px;height:34px;line-height:34px;font-weight:bold;font-size:10.5px;padding-right:1.5px">1734767,25</div>
<div class="rc" style="left:1304px;top:634px;width:73px;height:34px;line-height:34px;font-weight:bold;font-size:10.5px;padding-right:1.5px">37,01</div>
<div class="rc" style="left:1379px;top:634px;width:74px;height:34px;line-height:34px;font-weight:bold;font-size:10.5px;padding-right:1.5px">50923,61</div>
<div class="rc" style="left:1455px;top:634px;width:81px;height:34px;line-height:34px;font-weight:bold;font-size:10.5px;padding-right:1.5px">131059,27</div>
<div class="rc" style="left:1538px;top:634px;width:66px;height:34px;line-height:34px;font-weight:bold;font-size:10.5px;padding-right:1.5px">97,100</div>
<div class="rc" style="left:1606px;top:634px;width:93px;height:34px;line-height:34px;font-weight:bold;font-size:10.5px;padding-right:1.5px">4864563,99</div>
<div class="rc" style="left:1701px;top:634px;width:73px;height:34px;line-height:34px;font-weight:bold;font-size:10.5px;padding-right:1.5px">37,12</div>
<div class="rc" style="left:1776px;top:634px;width:74px;height:34px;line-height:34px;font-weight:bold;font-size:10.5px;padding-right:1.5px">50107,70</div>
<div class="rl" style="left:171px;top:668px;height:19px;line-height:19px">01.08.2017</div>
<div class="rc" style="left:264px;top:668px;width:81px;height:18px;line-height:19px;padding-right:0px">24376,43</div>
<div class="rc" style="left:348px;top:668px;width:62px;height:18px;line-height:19px;padding-right:0px">14,065</div>
<div class="rc" style="left:416px;top:668px;width:92px;height:18px;line-height:19px;padding-right:0.7px">904859,53</div>
<div class="rc" style="left:510px;top:668px;width:74px;height:18px;line-height:19px;padding-right:0.7px">37,12</div>
<div class="rc" style="left:586px;top:668px;width:73px;height:18px;line-height:19px;padding-right:0.7px">64336,42</div>
<div class="rc" style="left:661px;top:668px;width:81px;height:18px;line-height:19px;padding-right:0.7px">15972,37</div>
<div class="rc" style="left:744px;top:668px;width:66px;height:18px;line-height:19px;padding-right:0.7px">7,877</div>
<div class="rc" style="left:812px;top:668px;width:93px;height:18px;line-height:19px;padding-right:0.7px">594544,68</div>
<div class="rc" style="left:907px;top:668px;width:73px;height:18px;line-height:19px;padding-right:0.7px">37,22</div>
<div class="rc" style="left:982px;top:668px;width:74px;height:18px;line-height:19px;padding-right:0.7px">75474,74</div>
<div class="rc" style="left:1058px;top:668px;width:81px;height:18px;line-height:19px;padding-right:0.7px">1163,89</div>
<div class="rc" style="left:1141px;top:668px;width:66px;height:18px;line-height:19px;padding-right:0.7px">0,845</div>
<div class="rc" style="left:1209px;top:668px;width:93px;height:18px;line-height:19px;padding-right:0.7px">43273,82</div>
<div class="rc" style="left:1304px;top:668px;width:73px;height:18px;line-height:19px;padding-right:0.7px">37,18</div>
<div class="rc" style="left:1379px;top:668px;width:74px;height:18px;line-height:19px;padding-right:0.7px">51211,62</div>
<div class="rc" style="left:1455px;top:668px;width:81px;height:18px;line-height:19px;padding-right:0.7px">7240,17</div>
<div class="rc" style="left:1538px;top:668px;width:66px;height:18px;line-height:19px;padding-right:0.7px">5,342</div>
<div class="rc" style="left:1606px;top:668px;width:93px;height:18px;line-height:19px;padding-right:0.7px">267041,03</div>
<div class="rc" style="left:1701px;top:668px;width:73px;height:18px;line-height:19px;padding-right:0.7px">36,88</div>
<div class="rc" style="left:1776px;top:668px;width:74px;height:18px;line-height:19px;padding-right:0.7px">49988,96</div>
<div class="rl" style="left:171px;top:687px;height:19px;line-height:19px">02.08.2017</div>
<div class="rc" style="left:264px;top:687px;width:81px;height:18px;line-height:19px;padding-right:0px">25390,21</div>
<div class="rc" style="left:348px;top:687px;width:62px;height:18px;line-height:19px;padding-right:0px">18,731</div>
<div class="rc" style="left:416px;top:687px;width:92px;height:18px;line-height:19px;padding-right:0.7px">947674,60</div>
<div class="rc" style="left:510px;top:687px;width:74px;height:18px;line-height:19px;padding-right:0.7px">37,32</div>
<div class="rc" style="left:586px;top:687px;width:73px;height:18px;line-height:19px;padding-right:0.7px">50594,45</div>
<div class="rc" style="left:661px;top:687px;width:81px;height:18px;line-height:19px;padding-right:0.7px">17097,10</div>
<div class="rc" style="left:744px;top:687px;width:66px;height:18px;line-height:19px;padding-right:0.7px">12,600</div>
<div class="rc" style="left:812px;top:687px;width:93px;height:18px;line-height:19px;padding-right:0.7px">640737,08</div>
<div class="rc" style="left:907px;top:687px;width:73px;height:18px;line-height:19px;padding-right:0.7px">37,48</div>
<div class="rc" style="left:982px;top:687px;width:74px;height:18px;line-height:19px;padding-right:0.7px">50852,96</div>
<div class="rc" style="left:1058px;top:687px;width:81px;height:18px;line-height:19px;padding-right:0.7px">1037,76</div>
<div class="rc" style="left:1141px;top:687px;width:66px;height:18px;line-height:19px;padding-right:0.7px">0,775</div>
<div class="rc" style="left:1209px;top:687px;width:93px;height:18px;line-height:19px;padding-right:0.7px">38587,66</div>
<div class="rc" style="left:1304px;top:687px;width:73px;height:18px;line-height:19px;padding-right:0.7px">37,18</div>
<div class="rc" style="left:1379px;top:687px;width:74px;height:18px;line-height:19px;padding-right:0.7px">49803,38</div>
<div class="rc" style="left:1455px;top:687px;width:81px;height:18px;line-height:19px;padding-right:0.7px">7255,35</div>
<div class="rc" style="left:1538px;top:687px;width:66px;height:18px;line-height:19px;padding-right:0.7px">5,356</div>
<div class="rc" style="left:1606px;top:687px;width:93px;height:18px;line-height:19px;padding-right:0.7px">268349,86</div>
<div class="rc" style="left:1701px;top:687px;width:73px;height:18px;line-height:19px;padding-right:0.7px">36,99</div>
<div class="rc" style="left:1776px;top:687px;width:74px;height:18px;line-height:19px;padding-right:0.7px">50102,66</div>
<div class="rl" style="left:171px;top:706px;height:19px;line-height:19px">03.08.2017</div>
<div class="rc" style="left:264px;top:706px;width:81px;height:18px;line-height:19px;padding-right:0px">25222,22</div>
<div class="rc" style="left:348px;top:706px;width:62px;height:18px;line-height:19px;padding-right:0px">18,484</div>
<div class="rc" style="left:416px;top:706px;width:92px;height:18px;line-height:19px;padding-right:0.7px">939687,95</div>
<div class="rc" style="left:510px;top:706px;width:74px;height:18px;line-height:19px;padding-right:0.7px">37,26</div>
<div class="rc" style="left:586px;top:706px;width:73px;height:18px;line-height:19px;padding-right:0.7px">50839,01</div>
<div class="rc" style="left:661px;top:706px;width:81px;height:18px;line-height:19px;padding-right:0.7px">16166,23</div>
<div class="rc" style="left:744px;top:706px;width:66px;height:18px;line-height:19px;padding-right:0.7px">11,801</div>
<div class="rc" style="left:812px;top:706px;width:93px;height:18px;line-height:19px;padding-right:0.7px">602894,53</div>
<div class="rc" style="left:907px;top:706px;width:73px;height:18px;line-height:19px;padding-right:0.7px">37,29</div>
<div class="rc" style="left:982px;top:706px;width:74px;height:18px;line-height:19px;padding-right:0.7px">51088,43</div>
<div class="rc" style="left:1058px;top:706px;width:81px;height:18px;line-height:19px;padding-right:0.7px">803,37</div>
<div class="rc" style="left:1141px;top:706px;width:66px;height:18px;line-height:19px;padding-right:0.7px">0,590</div>
<div class="rc" style="left:1209px;top:706px;width:93px;height:18px;line-height:19px;padding-right:0.7px">29872,60</div>
<div class="rc" style="left:1304px;top:706px;width:73px;height:18px;line-height:19px;padding-right:0.7px">37,18</div>
<div class="rc" style="left:1379px;top:706px;width:74px;height:18px;line-height:19px;padding-right:0.7px">50648,69</div>
<div class="rc" style="left:1455px;top:706px;width:81px;height:18px;line-height:19px;padding-right:0.7px">8252,62</div>
<div class="rc" style="left:1538px;top:706px;width:66px;height:18px;line-height:19px;padding-right:0.7px">6,093</div>
<div class="rc" style="left:1606px;top:706px;width:93px;height:18px;line-height:19px;padding-right:0.7px">306920,82</div>
<div class="rc" style="left:1701px;top:706px;width:73px;height:18px;line-height:19px;padding-right:0.7px">37,19</div>
<div class="rc" style="left:1776px;top:706px;width:74px;height:18px;line-height:19px;padding-right:0.7px">50374,35</div>
<div class="rl" style="left:171px;top:725px;height:19px;line-height:19px">04.08.2017</div>
<div class="rc" style="left:264px;top:725px;width:81px;height:18px;line-height:19px;padding-right:0px">26508,43</div>
<div class="rc" style="left:348px;top:725px;width:62px;height:18px;line-height:19px;padding-right:0px">19,500</div>
<div class="rc" style="left:416px;top:725px;width:92px;height:18px;line-height:19px;padding-right:0.7px">988160,35</div>
<div class="rc" style="left:510px;top:725px;width:74px;height:18px;line-height:19px;padding-right:0.7px">37,28</div>
<div class="rc" style="left:586px;top:725px;width:73px;height:18px;line-height:19px;padding-right:0.7px">50673,85</div>
<div class="rc" style="left:661px;top:725px;width:81px;height:18px;line-height:19px;padding-right:0.7px">18451,48</div>
<div class="rc" style="left:744px;top:725px;width:66px;height:18px;line-height:19px;padding-right:0.7px">13,553</div>
<div class="rc" style="left:812px;top:725px;width:93px;height:18px;line-height:19px;padding-right:0.7px">691490,00</div>
<div class="rc" style="left:907px;top:725px;width:73px;height:18px;line-height:19px;padding-right:0.7px">37,48</div>
<div class="rc" style="left:982px;top:725px;width:74px;height:18px;line-height:19px;padding-right:0.7px">51019,29</div>
<div class="rc" style="left:1058px;top:725px;width:81px;height:18px;line-height:19px;padding-right:0.7px">528,72</div>
<div class="rc" style="left:1141px;top:725px;width:66px;height:18px;line-height:19px;padding-right:0.7px">0,395</div>
<div class="rc" style="left:1209px;top:725px;width:93px;height:18px;line-height:19px;padding-right:0.7px">18917,69</div>
<div class="rc" style="left:1304px;top:725px;width:73px;height:18px;line-height:19px;padding-right:0.7px">35,78</div>
<div class="rc" style="left:1379px;top:725px;width:74px;height:18px;line-height:19px;padding-right:0.7px">47929,29</div>
<div class="rc" style="left:1455px;top:725px;width:81px;height:18px;line-height:19px;padding-right:0.7px">7528,23</div>
<div class="rc" style="left:1538px;top:725px;width:66px;height:18px;line-height:19px;padding-right:0.7px">5,552</div>
<div class="rc" style="left:1606px;top:725px;width:93px;height:18px;line-height:19px;padding-right:0.7px">277752,66</div>
<div class="rc" style="left:1701px;top:725px;width:73px;height:18px;line-height:19px;padding-right:0.7px">36,89</div>
<div class="rc" style="left:1776px;top:725px;width:74px;height:18px;line-height:19px;padding-right:0.7px">50026,60</div>
<div class="rl" style="left:171px;top:744px;height:18px;line-height:18px">05.08.2017</div>
<div class="rc" style="left:264px;top:744px;width:81px;height:17px;line-height:18px;padding-right:0px">23101,60</div>
<div class="rc" style="left:348px;top:744px;width:62px;height:17px;line-height:18px;padding-right:0px">13,665</div>
<div class="rc" style="left:416px;top:744px;width:92px;height:17px;line-height:18px;padding-right:0.7px">862043,60</div>
<div class="rc" style="left:510px;top:744px;width:74px;height:17px;line-height:18px;padding-right:0.7px">37,32</div>
<div class="rc" style="left:586px;top:744px;width:73px;height:17px;line-height:18px;padding-right:0.7px">63086,36</div>
<div class="rc" style="left:661px;top:744px;width:81px;height:17px;line-height:18px;padding-right:0.7px">14974,00</div>
<div class="rc" style="left:744px;top:744px;width:66px;height:17px;line-height:18px;padding-right:0.7px">7,664</div>
<div class="rc" style="left:812px;top:744px;width:93px;height:17px;line-height:18px;padding-right:0.7px">561262,07</div>
<div class="rc" style="left:907px;top:744px;width:73px;height:17px;line-height:18px;padding-right:0.7px">37,48</div>
<div class="rc" style="left:982px;top:744px;width:74px;height:17px;line-height:18px;padding-right:0.7px">73235,48</div>
<div class="rc" style="left:1058px;top:744px;width:81px;height:17px;line-height:18px;padding-right:0.7px">490,48</div>
<div class="rc" style="left:1141px;top:744px;width:66px;height:17px;line-height:18px;padding-right:0.7px">0,366</div>
<div class="rc" style="left:1209px;top:744px;width:93px;height:17px;line-height:18px;padding-right:0.7px">17494,36</div>
<div class="rc" style="left:1304px;top:744px;width:73px;height:17px;line-height:18px;padding-right:0.7px">35,67</div>
<div class="rc" style="left:1379px;top:744px;width:74px;height:17px;line-height:18px;padding-right:0.7px">47772,69</div>
<div class="rc" style="left:1455px;top:744px;width:81px;height:17px;line-height:18px;padding-right:0.7px">7637,12</div>
<div class="rc" style="left:1538px;top:744px;width:66px;height:17px;line-height:18px;padding-right:0.7px">5,634</div>
<div class="rc" style="left:1606px;top:744px;width:93px;height:17px;line-height:18px;padding-right:0.7px">283287,17</div>
<div class="rc" style="left:1701px;top:744px;width:73px;height:17px;line-height:18px;padding-right:0.7px">37,09</div>
<div class="rc" style="left:1776px;top:744px;width:74px;height:17px;line-height:18px;padding-right:0.7px">50278,14</div>
<div class="rl" style="left:171px;top:762px;height:19px;line-height:19px">06.08.2017</div>
<div class="rc" style="left:264px;top:762px;width:81px;height:18px;line-height:19px;padding-right:0px">18306,08</div>
<div class="rc" style="left:348px;top:762px;width:62px;height:18px;line-height:19px;padding-right:0px">13,518</div>
<div class="rc" style="left:416px;top:762px;width:92px;height:18px;line-height:19px;padding-right:0.7px">682665,24</div>
<div class="rc" style="left:510px;top:762px;width:74px;height:18px;line-height:19px;padding-right:0.7px">37,29</div>
<div class="rc" style="left:586px;top:762px;width:73px;height:18px;line-height:19px;padding-right:0.7px">50499,34</div>
<div class="rc" style="left:661px;top:762px;width:81px;height:18px;line-height:19px;padding-right:0.7px">11662,63</div>
<div class="rc" style="left:744px;top:762px;width:66px;height:18px;line-height:19px;padding-right:0.7px">8,609</div>
<div class="rc" style="left:812px;top:762px;width:93px;height:18px;line-height:19px;padding-right:0.7px">435603,82</div>
<div class="rc" style="left:907px;top:762px;width:73px;height:18px;line-height:19px;padding-right:0.7px">37,35</div>
<div class="rc" style="left:982px;top:762px;width:74px;height:18px;line-height:19px;padding-right:0.7px">50596,65</div>
<div class="rc" style="left:1058px;top:762px;width:81px;height:18px;line-height:19px;padding-right:0.7px">428,17</div>
<div class="rc" style="left:1141px;top:762px;width:66px;height:18px;line-height:19px;padding-right:0.7px">0,320</div>
<div class="rc" style="left:1209px;top:762px;width:93px;height:18px;line-height:19px;padding-right:0.7px">15920,72</div>
<div class="rc" style="left:1304px;top:762px;width:73px;height:18px;line-height:19px;padding-right:0.7px">37,18</div>
<div class="rc" style="left:1379px;top:762px;width:74px;height:18px;line-height:19px;padding-right:0.7px">49798,94</div>
<div class="rc" style="left:1455px;top:762px;width:81px;height:18px;line-height:19px;padding-right:0.7px">6215,28</div>
<div class="rc" style="left:1538px;top:762px;width:66px;height:18px;line-height:19px;padding-right:0.7px">4,590</div>
<div class="rc" style="left:1606px;top:762px;width:93px;height:18px;line-height:19px;padding-right:0.7px">231140,70</div>
<div class="rc" style="left:1701px;top:762px;width:73px;height:18px;line-height:19px;padding-right:0.7px">37,19</div>
<div class="rc" style="left:1776px;top:762px;width:74px;height:18px;line-height:19px;padding-right:0.7px">50361,84</div>
<div class="rl" style="left:171px;top:781px;height:19px;line-height:19px">07.08.2017</div>
<div class="rc" style="left:264px;top:781px;width:81px;height:18px;line-height:19px;padding-right:0px">23596,38</div>
<div class="rc" style="left:348px;top:781px;width:62px;height:18px;line-height:19px;padding-right:0px">14,290</div>
<div class="rc" style="left:416px;top:781px;width:92px;height:18px;line-height:19px;padding-right:0.7px">879787,32</div>
<div class="rc" style="left:510px;top:781px;width:74px;height:18px;line-height:19px;padding-right:0.7px">37,28</div>
<div class="rc" style="left:586px;top:781px;width:73px;height:18px;line-height:19px;padding-right:0.7px">61565,35</div>
<div class="rc" style="left:661px;top:781px;width:81px;height:18px;line-height:19px;padding-right:0.7px">15678,13</div>
<div class="rc" style="left:744px;top:781px;width:66px;height:18px;line-height:19px;padding-right:0.7px">9,242</div>
<div class="rc" style="left:812px;top:781px;width:93px;height:18px;line-height:19px;padding-right:0.7px">585304,68</div>
<div class="rc" style="left:907px;top:781px;width:73px;height:18px;line-height:19px;padding-right:0.7px">37,33</div>
<div class="rc" style="left:982px;top:781px;width:74px;height:18px;line-height:19px;padding-right:0.7px">63332,32</div>
<div class="rc" style="left:1058px;top:781px;width:81px;height:18px;line-height:19px;padding-right:0.7px">650,03</div>
<div class="rc" style="left:1141px;top:781px;width:66px;height:18px;line-height:19px;padding-right:0.7px">0,476</div>
<div class="rc" style="left:1209px;top:781px;width:93px;height:18px;line-height:19px;padding-right:0.7px">24170,14</div>
<div class="rc" style="left:1304px;top:781px;width:73px;height:18px;line-height:19px;padding-right:0.7px">37,18</div>
<div class="rc" style="left:1379px;top:781px;width:74px;height:18px;line-height:19px;padding-right:0.7px">50798,95</div>
<div class="rc" style="left:1455px;top:781px;width:81px;height:18px;line-height:19px;padding-right:0.7px">7268,22</div>
<div class="rc" style="left:1538px;top:781px;width:66px;height:18px;line-height:19px;padding-right:0.7px">4,573</div>
<div class="rc" style="left:1606px;top:781px;width:93px;height:18px;line-height:19px;padding-right:0.7px">270312,50</div>
<div class="rc" style="left:1701px;top:781px;width:73px;height:18px;line-height:19px;padding-right:0.7px">37,19</div>
<div class="rc" style="left:1776px;top:781px;width:74px;height:18px;line-height:19px;padding-right:0.7px">59115,71</div>
<div class="rl" style="left:171px;top:800px;height:19px;line-height:19px">08.08.2017</div>
<div class="rc" style="left:264px;top:800px;width:81px;height:18px;line-height:19px;padding-right:0px">22486,66</div>
<div class="rc" style="left:348px;top:800px;width:62px;height:18px;line-height:19px;padding-right:0px">16,558</div>
<div class="rc" style="left:416px;top:800px;width:92px;height:18px;line-height:19px;padding-right:0.7px">837580,46</div>
<div class="rc" style="left:510px;top:800px;width:74px;height:18px;line-height:19px;padding-right:0.7px">37,25</div>
<div class="rc" style="left:586px;top:800px;width:73px;height:18px;line-height:19px;padding-right:0.7px">50584,94</div>
<div class="rc" style="left:661px;top:800px;width:81px;height:18px;line-height:19px;padding-right:0.7px">15092,33</div>
<div class="rc" style="left:744px;top:800px;width:66px;height:18px;line-height:19px;padding-right:0.7px">11,094</div>
<div class="rc" style="left:812px;top:800px;width:93px;height:18px;line-height:19px;padding-right:0.7px">564068,56</div>
<div class="rc" style="left:907px;top:800px;width:73px;height:18px;line-height:19px;padding-right:0.7px">37,37</div>
<div class="rc" style="left:982px;top:800px;width:74px;height:18px;line-height:19px;padding-right:0.7px">50844,93</div>
<div class="rc" style="left:1058px;top:800px;width:81px;height:18px;line-height:19px;padding-right:0.7px">545,53</div>
<div class="rc" style="left:1141px;top:800px;width:66px;height:18px;line-height:19px;padding-right:0.7px">0,398</div>
<div class="rc" style="left:1209px;top:800px;width:93px;height:18px;line-height:19px;padding-right:0.7px">19541,10</div>
<div class="rc" style="left:1304px;top:800px;width:73px;height:18px;line-height:19px;padding-right:0.7px">35,82</div>
<div class="rc" style="left:1379px;top:800px;width:74px;height:18px;line-height:19px;padding-right:0.7px">49073,58</div>
<div class="rc" style="left:1455px;top:800px;width:81px;height:18px;line-height:19px;padding-right:0.7px">6848,80</div>
<div class="rc" style="left:1538px;top:800px;width:66px;height:18px;line-height:19px;padding-right:0.7px">5,066</div>
<div class="rc" style="left:1606px;top:800px;width:93px;height:18px;line-height:19px;padding-right:0.7px">253970,80</div>
<div class="rc" style="left:1701px;top:800px;width:73px;height:18px;line-height:19px;padding-right:0.7px">37,08</div>
<div class="rc" style="left:1776px;top:800px;width:74px;height:18px;line-height:19px;padding-right:0.7px">50135,38</div>
<div class="rl" style="left:171px;top:819px;height:19px;line-height:19px">09.08.2017</div>
<div class="rc" style="left:264px;top:819px;width:81px;height:18px;line-height:19px;padding-right:0px">11320,39</div>
<div class="rc" style="left:348px;top:819px;width:62px;height:18px;line-height:19px;padding-right:0px">8,331</div>
<div class="rc" style="left:416px;top:819px;width:92px;height:18px;line-height:19px;padding-right:0.7px">423352,54</div>
<div class="rc" style="left:510px;top:819px;width:74px;height:18px;line-height:19px;padding-right:0.7px">37,40</div>
<div class="rc" style="left:586px;top:819px;width:73px;height:18px;line-height:19px;padding-right:0.7px">50816,53</div>
<div class="rc" style="left:661px;top:819px;width:81px;height:18px;line-height:19px;padding-right:0.7px">8114,79</div>
<div class="rc" style="left:744px;top:819px;width:66px;height:18px;line-height:19px;padding-right:0.7px">5,959</div>
<div class="rc" style="left:812px;top:819px;width:93px;height:18px;line-height:19px;padding-right:0.7px">304134,06</div>
<div class="rc" style="left:907px;top:819px;width:73px;height:18px;line-height:19px;padding-right:0.7px">37,48</div>
<div class="rc" style="left:982px;top:819px;width:74px;height:18px;line-height:19px;padding-right:0.7px">51035,20</div>
<div class="rc" style="left:1058px;top:819px;width:81px;height:18px;line-height:19px;padding-right:0.7px">67,66</div>
<div class="rc" style="left:1141px;top:819px;width:66px;height:18px;line-height:19px;padding-right:0.7px">0,051</div>
<div class="rc" style="left:1209px;top:819px;width:93px;height:18px;line-height:19px;padding-right:0.7px">2515,70</div>
<div class="rc" style="left:1304px;top:819px;width:73px;height:18px;line-height:19px;padding-right:0.7px">37,18</div>
<div class="rc" style="left:1379px;top:819px;width:74px;height:18px;line-height:19px;padding-right:0.7px">49717,39</div>
<div class="rc" style="left:1455px;top:819px;width:81px;height:18px;line-height:19px;padding-right:0.7px">3137,94</div>
<div class="rc" style="left:1538px;top:819px;width:66px;height:18px;line-height:19px;padding-right:0.7px">2,321</div>
<div class="rc" style="left:1606px;top:819px;width:93px;height:18px;line-height:19px;padding-right:0.7px">116702,78</div>
<div class="rc" style="left:1701px;top:819px;width:73px;height:18px;line-height:19px;padding-right:0.7px">37,19</div>
<div class="rc" style="left:1776px;top:819px;width:74px;height:18px;line-height:19px;padding-right:0.7px">50279,08</div>
<div style="left:171px;top:839px;height:34px;width:92px;font-size:10.5px;font-weight:bold;line-height:11.4px;display:flex;align-items:center;white-space:nowrap">Итог за август<br>2017</div>
<div class="rc" style="left:264px;top:838px;width:81px;height:34px;line-height:34px;font-weight:bold;font-size:10.5px;padding-right:0px">200308,40</div>
<div class="rc" style="left:348px;top:838px;width:64px;height:34px;line-height:34px;font-weight:bold;font-size:10.5px;padding-right:0px">137,141</div>
<div class="rc" style="left:416px;top:838px;width:92px;height:34px;line-height:34px;font-weight:bold;font-size:10.5px;padding-right:1.5px">7465811,59</div>
<div class="rc" style="left:510px;top:838px;width:74px;height:34px;line-height:34px;font-weight:bold;font-size:10.5px;padding-right:1.5px">37,27</div>
<div class="rc" style="left:586px;top:838px;width:73px;height:34px;line-height:34px;font-weight:bold;font-size:10.5px;padding-right:1.5px">54438,83</div>
<div class="rc" style="left:661px;top:838px;width:81px;height:34px;line-height:34px;font-weight:bold;font-size:10.5px;padding-right:1.5px">133209,06</div>
<div class="rc" style="left:744px;top:838px;width:66px;height:34px;line-height:34px;font-weight:bold;font-size:10.5px;padding-right:1.5px">88,400</div>
<div class="rc" style="left:812px;top:838px;width:93px;height:34px;line-height:34px;font-weight:bold;font-size:10.5px;padding-right:1.5px">4980039,48</div>
<div class="rc" style="left:907px;top:838px;width:73px;height:34px;line-height:34px;font-weight:bold;font-size:10.5px;padding-right:1.5px">37,39</div>
<div class="rc" style="left:982px;top:838px;width:74px;height:34px;line-height:34px;font-weight:bold;font-size:10.5px;padding-right:1.5px">57498,00</div>
<div class="rc" style="left:1058px;top:838px;width:81px;height:34px;line-height:34px;font-weight:bold;font-size:10.5px;padding-right:1.5px">5715,61</div>
<div class="rc" style="left:1141px;top:838px;width:66px;height:34px;line-height:34px;font-weight:bold;font-size:10.5px;padding-right:1.5px">4,215</div>
<div class="rc" style="left:1209px;top:838px;width:93px;height:34px;line-height:34px;font-weight:bold;font-size:10.5px;padding-right:1.5px">210293,79</div>
<div class="rc" style="left:1304px;top:838px;width:73px;height:34px;line-height:34px;font-weight:bold;font-size:10.5px;padding-right:1.5px">36,71</div>
<div class="rc" style="left:1379px;top:838px;width:74px;height:34px;line-height:34px;font-weight:bold;font-size:10.5px;padding-right:1.5px">49639,39</div>
<div class="rc" style="left:1455px;top:838px;width:81px;height:34px;line-height:34px;font-weight:bold;font-size:10.5px;padding-right:1.5px">61383,73</div>
<div class="rc" style="left:1538px;top:838px;width:66px;height:34px;line-height:34px;font-weight:bold;font-size:10.5px;padding-right:1.5px">44,526</div>
<div class="rc" style="left:1606px;top:838px;width:93px;height:34px;line-height:34px;font-weight:bold;font-size:10.5px;padding-right:1.5px">2275478,32</div>
<div class="rc" style="left:1701px;top:838px;width:73px;height:34px;line-height:34px;font-weight:bold;font-size:10.5px;padding-right:1.5px">37,08</div>
<div class="rc" style="left:1776px;top:838px;width:74px;height:34px;line-height:34px;font-weight:bold;font-size:10.5px;padding-right:1.5px">51184,75</div>
<div style="left:171px;top:873px;height:34px;width:92px;font-size:10.5px;font-weight:bold;line-height:11.4px;display:flex;align-items:center;white-space:nowrap">Общий итог за<br>период:</div>
<div class="rc" style="left:264px;top:872px;width:81px;height:34px;line-height:34px;font-weight:bold;font-size:10.5px;padding-right:0px">648518,25</div>
<div class="rc" style="left:348px;top:872px;width:64px;height:34px;line-height:34px;font-weight:bold;font-size:10.5px;padding-right:0px">468,038</div>
<div class="rc" style="left:416px;top:872px;width:92px;height:34px;line-height:34px;font-weight:bold;font-size:10.5px;padding-right:1.5px">24172887,11</div>
<div class="rc" style="left:510px;top:872px;width:74px;height:34px;line-height:34px;font-weight:bold;font-size:10.5px;padding-right:1.5px">37,27</div>
<div class="rc" style="left:586px;top:872px;width:73px;height:34px;line-height:34px;font-weight:bold;font-size:10.5px;padding-right:1.5px">51647,26</div>
<div class="rc" style="left:661px;top:872px;width:81px;height:34px;line-height:34px;font-weight:bold;font-size:10.5px;padding-right:1.5px">403516,10</div>
<div class="rc" style="left:744px;top:872px;width:66px;height:34px;line-height:34px;font-weight:bold;font-size:10.5px;padding-right:1.5px">288,227</div>
<div class="rc" style="left:812px;top:872px;width:93px;height:34px;line-height:34px;font-weight:bold;font-size:10.5px;padding-right:1.5px">15087783,76</div>
<div class="rc" style="left:907px;top:872px;width:73px;height:34px;line-height:34px;font-weight:bold;font-size:10.5px;padding-right:1.5px">37,39</div>
<div class="rc" style="left:982px;top:872px;width:74px;height:34px;line-height:34px;font-weight:bold;font-size:10.5px;padding-right:1.5px">52894,39</div>
<div class="rc" style="left:1058px;top:872px;width:81px;height:34px;line-height:34px;font-weight:bold;font-size:10.5px;padding-right:1.5px">52559,15</div>
<div class="rc" style="left:1141px;top:872px;width:66px;height:34px;line-height:34px;font-weight:bold;font-size:10.5px;padding-right:1.5px">38,183</div>
<div class="rc" style="left:1209px;top:872px;width:93px;height:34px;line-height:34px;font-weight:bold;font-size:10.5px;padding-right:1.5px">1945061,04</div>
<div class="rc" style="left:1304px;top:872px;width:73px;height:34px;line-height:34px;font-weight:bold;font-size:10.5px;padding-right:1.5px">36,91</div>
<div class="rc" style="left:1379px;top:872px;width:74px;height:34px;line-height:34px;font-weight:bold;font-size:10.5px;padding-right:1.5px">50495,54</div>
<div class="rc" style="left:1455px;top:872px;width:81px;height:34px;line-height:34px;font-weight:bold;font-size:10.5px;padding-right:1.5px">192443,00</div>
<div class="rc" style="left:1538px;top:872px;width:66px;height:34px;line-height:34px;font-weight:bold;font-size:10.5px;padding-right:1.5px">141,626</div>
<div class="rc" style="left:1606px;top:872px;width:93px;height:34px;line-height:34px;font-weight:bold;font-size:10.5px;padding-right:1.5px">7140042,31</div>
<div class="rc" style="left:1701px;top:872px;width:73px;height:34px;line-height:34px;font-weight:bold;font-size:10.5px;padding-right:1.5px">37,10</div>
<div class="rc" style="left:1776px;top:872px;width:74px;height:34px;line-height:34px;font-weight:bold;font-size:10.5px;padding-right:1.5px">50466,72</div>
<div style="left:169px;top:221px;width:1683px;height:1px;background:rgba(128,128,128,0.42)"></div>
<div style="left:263px;top:248px;width:1589px;height:1px;background:rgba(128,128,128,0.42)"></div>
<div style="left:169px;top:293px;width:1683px;height:1px;background:rgba(128,128,128,0.42)"></div>
<div style="left:169px;top:312px;width:1683px;height:1px;background:rgba(128,128,128,0.42)"></div>
<div style="left:169px;top:331px;width:1683px;height:1px;background:rgba(128,128,128,0.42)"></div>
<div style="left:169px;top:350px;width:1683px;height:1px;background:rgba(128,128,128,0.42)"></div>
<div style="left:169px;top:369px;width:1683px;height:1px;background:rgba(128,128,128,0.42)"></div>
<div style="left:169px;top:387px;width:1683px;height:1px;background:rgba(128,128,128,0.42)"></div>
<div style="left:169px;top:406px;width:1683px;height:1px;background:rgba(128,128,128,0.42)"></div>
<div style="left:169px;top:425px;width:1683px;height:1px;background:rgba(128,128,128,0.42)"></div>
<div style="left:169px;top:444px;width:1683px;height:1px;background:rgba(128,128,128,0.42)"></div>
<div style="left:169px;top:463px;width:1683px;height:1px;background:rgba(128,128,128,0.42)"></div>
<div style="left:169px;top:482px;width:1683px;height:1px;background:rgba(128,128,128,0.42)"></div>
<div style="left:169px;top:501px;width:1683px;height:1px;background:rgba(128,128,128,0.42)"></div>
<div style="left:169px;top:520px;width:1683px;height:1px;background:rgba(128,128,128,0.42)"></div>
<div style="left:169px;top:539px;width:1683px;height:1px;background:rgba(128,128,128,0.42)"></div>
<div style="left:169px;top:557px;width:1683px;height:1px;background:rgba(128,128,128,0.42)"></div>
<div style="left:169px;top:576px;width:1683px;height:1px;background:rgba(128,128,128,0.42)"></div>
<div style="left:169px;top:595px;width:1683px;height:1px;background:rgba(128,128,128,0.42)"></div>
<div style="left:169px;top:614px;width:1683px;height:1px;background:rgba(128,128,128,0.42)"></div>
<div style="left:169px;top:633px;width:1683px;height:1px;background:rgba(128,128,128,0.42)"></div>
<div style="left:169px;top:667px;width:1683px;height:1px;background:rgba(128,128,128,0.42)"></div>
<div style="left:169px;top:686px;width:1683px;height:1px;background:rgba(128,128,128,0.42)"></div>
<div style="left:169px;top:705px;width:1683px;height:1px;background:rgba(128,128,128,0.42)"></div>
<div style="left:169px;top:724px;width:1683px;height:1px;background:rgba(128,128,128,0.42)"></div>
<div style="left:169px;top:743px;width:1683px;height:1px;background:rgba(128,128,128,0.42)"></div>
<div style="left:169px;top:761px;width:1683px;height:1px;background:rgba(128,128,128,0.42)"></div>
<div style="left:169px;top:780px;width:1683px;height:1px;background:rgba(128,128,128,0.42)"></div>
<div style="left:169px;top:799px;width:1683px;height:1px;background:rgba(128,128,128,0.42)"></div>
<div style="left:169px;top:818px;width:1683px;height:1px;background:rgba(128,128,128,0.42)"></div>
<div style="left:169px;top:837px;width:1683px;height:1px;background:rgba(128,128,128,0.42)"></div>
<div style="left:169px;top:871px;width:1683px;height:1px;background:rgba(128,128,128,0.42)"></div>
<div style="left:169px;top:905px;width:1683px;height:1px;background:rgba(128,128,128,0.42)"></div>
<div style="left:169px;top:221px;width:1px;height:685px;background:rgba(128,128,128,0.42)"></div>
<div style="left:263px;top:221px;width:1px;height:685px;background:rgba(128,128,128,0.42)"></div>
<div style="left:347px;top:248px;width:1px;height:658px;background:rgba(128,128,128,0.42)"></div>
<div style="left:415px;top:248px;width:1px;height:658px;background:rgba(128,128,128,0.42)"></div>
<div style="left:509px;top:248px;width:1px;height:658px;background:rgba(128,128,128,0.42)"></div>
<div style="left:585px;top:248px;width:1px;height:658px;background:rgba(128,128,128,0.42)"></div>
<div style="left:660px;top:221px;width:1px;height:685px;background:rgba(128,128,128,0.42)"></div>
<div style="left:743px;top:248px;width:1px;height:658px;background:rgba(128,128,128,0.42)"></div>
<div style="left:811px;top:248px;width:1px;height:658px;background:rgba(128,128,128,0.42)"></div>
<div style="left:906px;top:248px;width:1px;height:658px;background:rgba(128,128,128,0.42)"></div>
<div style="left:981px;top:248px;width:1px;height:658px;background:rgba(128,128,128,0.42)"></div>
<div style="left:1057px;top:221px;width:1px;height:685px;background:rgba(128,128,128,0.42)"></div>
<div style="left:1140px;top:248px;width:1px;height:658px;background:rgba(128,128,128,0.42)"></div>
<div style="left:1208px;top:248px;width:1px;height:658px;background:rgba(128,128,128,0.42)"></div>
<div style="left:1303px;top:248px;width:1px;height:658px;background:rgba(128,128,128,0.42)"></div>
<div style="left:1378px;top:248px;width:1px;height:658px;background:rgba(128,128,128,0.42)"></div>
<div style="left:1454px;top:221px;width:1px;height:685px;background:rgba(128,128,128,0.42)"></div>
<div style="left:1537px;top:248px;width:1px;height:658px;background:rgba(128,128,128,0.42)"></div>
<div style="left:1605px;top:248px;width:1px;height:658px;background:rgba(128,128,128,0.42)"></div>
<div style="left:1700px;top:248px;width:1px;height:658px;background:rgba(128,128,128,0.42)"></div>
<div style="left:1775px;top:248px;width:1px;height:658px;background:rgba(128,128,128,0.42)"></div>
<div style="left:1851px;top:221px;width:1px;height:685px;background:rgba(128,128,128,0.42)"></div>
<div style="left:343px;top:293px;width:1px;height:20px;background:rgba(128,128,128,0.42)"></div>
<div style="left:411px;top:293px;width:1px;height:20px;background:rgba(128,128,128,0.42)"></div>
<div style="left:343px;top:312px;width:1px;height:20px;background:rgba(128,128,128,0.42)"></div>
<div style="left:411px;top:312px;width:1px;height:20px;background:rgba(128,128,128,0.42)"></div>
<div style="left:343px;top:331px;width:1px;height:20px;background:rgba(128,128,128,0.42)"></div>
<div style="left:411px;top:331px;width:1px;height:20px;background:rgba(128,128,128,0.42)"></div>
<div style="left:343px;top:350px;width:1px;height:20px;background:rgba(128,128,128,0.42)"></div>
<div style="left:411px;top:350px;width:1px;height:20px;background:rgba(128,128,128,0.42)"></div>
<div style="left:343px;top:369px;width:1px;height:19px;background:rgba(128,128,128,0.42)"></div>
<div style="left:411px;top:369px;width:1px;height:19px;background:rgba(128,128,128,0.42)"></div>
<div style="left:343px;top:387px;width:1px;height:20px;background:rgba(128,128,128,0.42)"></div>
<div style="left:411px;top:387px;width:1px;height:20px;background:rgba(128,128,128,0.42)"></div>
<div style="left:343px;top:406px;width:1px;height:20px;background:rgba(128,128,128,0.42)"></div>
<div style="left:411px;top:406px;width:1px;height:20px;background:rgba(128,128,128,0.42)"></div>
<div style="left:343px;top:425px;width:1px;height:20px;background:rgba(128,128,128,0.42)"></div>
<div style="left:411px;top:425px;width:1px;height:20px;background:rgba(128,128,128,0.42)"></div>
<div style="left:343px;top:444px;width:1px;height:20px;background:rgba(128,128,128,0.42)"></div>
<div style="left:411px;top:444px;width:1px;height:20px;background:rgba(128,128,128,0.42)"></div>
<div style="left:343px;top:463px;width:1px;height:20px;background:rgba(128,128,128,0.42)"></div>
<div style="left:411px;top:463px;width:1px;height:20px;background:rgba(128,128,128,0.42)"></div>
<div style="left:343px;top:482px;width:1px;height:20px;background:rgba(128,128,128,0.42)"></div>
<div style="left:411px;top:482px;width:1px;height:20px;background:rgba(128,128,128,0.42)"></div>
<div style="left:343px;top:501px;width:1px;height:20px;background:rgba(128,128,128,0.42)"></div>
<div style="left:411px;top:501px;width:1px;height:20px;background:rgba(128,128,128,0.42)"></div>
<div style="left:343px;top:520px;width:1px;height:20px;background:rgba(128,128,128,0.42)"></div>
<div style="left:411px;top:520px;width:1px;height:20px;background:rgba(128,128,128,0.42)"></div>
<div style="left:343px;top:539px;width:1px;height:19px;background:rgba(128,128,128,0.42)"></div>
<div style="left:411px;top:539px;width:1px;height:19px;background:rgba(128,128,128,0.42)"></div>
<div style="left:343px;top:557px;width:1px;height:20px;background:rgba(128,128,128,0.42)"></div>
<div style="left:411px;top:557px;width:1px;height:20px;background:rgba(128,128,128,0.42)"></div>
<div style="left:343px;top:576px;width:1px;height:20px;background:rgba(128,128,128,0.42)"></div>
<div style="left:411px;top:576px;width:1px;height:20px;background:rgba(128,128,128,0.42)"></div>
<div style="left:343px;top:595px;width:1px;height:20px;background:rgba(128,128,128,0.42)"></div>
<div style="left:411px;top:595px;width:1px;height:20px;background:rgba(128,128,128,0.42)"></div>
<div style="left:343px;top:614px;width:1px;height:20px;background:rgba(128,128,128,0.42)"></div>
<div style="left:411px;top:614px;width:1px;height:20px;background:rgba(128,128,128,0.42)"></div>
<div style="left:343px;top:667px;width:1px;height:20px;background:rgba(128,128,128,0.42)"></div>
<div style="left:411px;top:667px;width:1px;height:20px;background:rgba(128,128,128,0.42)"></div>
<div style="left:343px;top:686px;width:1px;height:20px;background:rgba(128,128,128,0.42)"></div>
<div style="left:411px;top:686px;width:1px;height:20px;background:rgba(128,128,128,0.42)"></div>
<div style="left:343px;top:705px;width:1px;height:20px;background:rgba(128,128,128,0.42)"></div>
<div style="left:411px;top:705px;width:1px;height:20px;background:rgba(128,128,128,0.42)"></div>
<div style="left:343px;top:724px;width:1px;height:20px;background:rgba(128,128,128,0.42)"></div>
<div style="left:411px;top:724px;width:1px;height:20px;background:rgba(128,128,128,0.42)"></div>
<div style="left:343px;top:743px;width:1px;height:19px;background:rgba(128,128,128,0.42)"></div>
<div style="left:411px;top:743px;width:1px;height:19px;background:rgba(128,128,128,0.42)"></div>
<div style="left:343px;top:761px;width:1px;height:20px;background:rgba(128,128,128,0.42)"></div>
<div style="left:411px;top:761px;width:1px;height:20px;background:rgba(128,128,128,0.42)"></div>
<div style="left:343px;top:780px;width:1px;height:20px;background:rgba(128,128,128,0.42)"></div>
<div style="left:411px;top:780px;width:1px;height:20px;background:rgba(128,128,128,0.42)"></div>
<div style="left:343px;top:799px;width:1px;height:20px;background:rgba(128,128,128,0.42)"></div>
<div style="left:411px;top:799px;width:1px;height:20px;background:rgba(128,128,128,0.42)"></div>
<div style="left:343px;top:818px;width:1px;height:20px;background:rgba(128,128,128,0.42)"></div>
<div style="left:411px;top:818px;width:1px;height:20px;background:rgba(128,128,128,0.42)"></div>
</body></html>
